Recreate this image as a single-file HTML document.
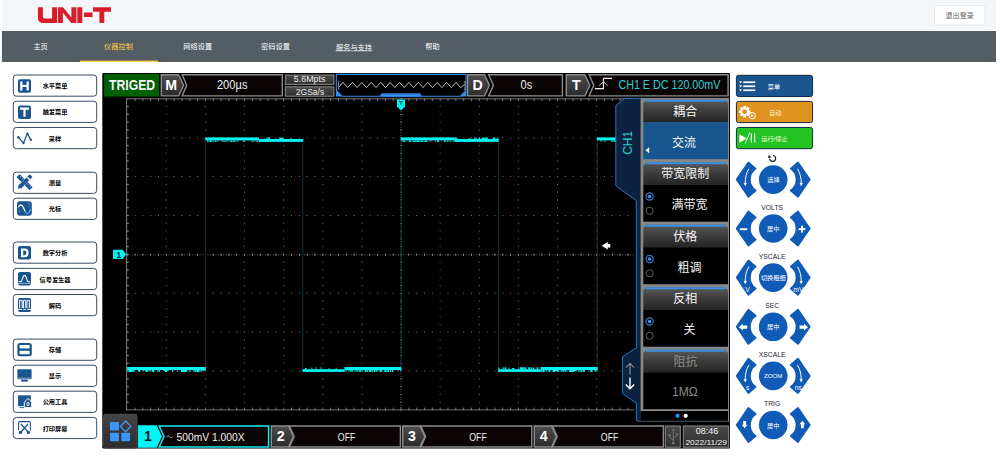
<!DOCTYPE html>
<html><head><meta charset="utf-8"><title>UNI-T</title>
<style>html,body{margin:0;padding:0;background:#fff;overflow:hidden}svg{display:block}text{font-family:"Liberation Sans","Noto Sans CJK SC",sans-serif}</style>
</head><body>
<svg width="1000" height="460" viewBox="0 0 1000 460" font-family="Liberation Sans, Noto Sans CJK SC, sans-serif">
<defs>
<linearGradient id="gpent" x1="0" y1="0" x2="0" y2="1"><stop offset="0" stop-color="#4c4c4c"/><stop offset="1" stop-color="#2b2b2b"/></linearGradient>
<linearGradient id="ghead" x1="0" y1="0" x2="0" y2="1"><stop offset="0" stop-color="#5a5a5a"/><stop offset="0.5" stop-color="#3c3c3c"/><stop offset="1" stop-color="#242424"/></linearGradient>
<linearGradient id="gsmall" x1="0" y1="0" x2="0" y2="1"><stop offset="0" stop-color="#484848"/><stop offset="1" stop-color="#303030"/></linearGradient>
<linearGradient id="gbtn" x1="0" y1="0" x2="0" y2="1"><stop offset="0" stop-color="#454545"/><stop offset="1" stop-color="#2c2c2c"/></linearGradient>
</defs>
<rect x="2" y="0" width="994" height="31" fill="#f4f7f9"/>
<rect x="2" y="31" width="994" height="31" fill="#545c64"/>
<path d="M37.9 7.2H42.9V16.7Q42.9 18.5 44.7 18.5H52.1V7.2H57V23H43.6Q37.9 23 37.9 17.4Z M57.9 23V7.2H63.1L71.4 17.5V7.2H76.4V23H71.2L62.9 12.7V23Z M77.3 7.2H82.3V23H77.3Z M83.9 12.6H92.6V17.1H83.9Z M93 7.2H111V11.7H104.3V23H99.4V11.7H93Z" fill="#d81e2c"/>
<text x="40.6" y="49.4" font-size="7.2" fill="#fff" text-anchor="middle">主页</text>
<text x="118.5" y="49.4" font-size="7.2" fill="#ffd04b" text-anchor="middle">仪器控制</text>
<text x="197.7" y="49.4" font-size="7.2" fill="#fff" text-anchor="middle">网络设置</text>
<text x="275.5" y="49.4" font-size="7.2" fill="#fff" text-anchor="middle">密码设置</text>
<text x="354" y="49.8" font-size="7.2" fill="#fff" text-anchor="middle">服务与支持</text>
<text x="432.4" y="49.4" font-size="7.2" fill="#fff" text-anchor="middle">帮助</text>
<rect x="80" y="60.6" width="78" height="1.4" fill="#ffd04b"/>
<rect x="335.5" y="50.6" width="37" height="0.6" fill="#fff"/>
<rect x="934.5" y="5.5" width="50.5" height="19.5" rx="2" fill="#fff" stroke="#dcdfe6" stroke-width="0.7"/>
<text x="959.7" y="17.8" font-size="7.1" fill="#606266" text-anchor="middle">退出登录</text>
<rect x="13.3" y="75" width="83.4" height="21.2" rx="3" fill="#fff" stroke="#24384f" stroke-width="0.9"/>
<text x="55" y="88.2" font-size="6.2" fill="#000" text-anchor="middle" font-weight="bold">水平菜单</text>
<rect x="13.3" y="101.2" width="83.4" height="21.2" rx="3" fill="#fff" stroke="#24384f" stroke-width="0.9"/>
<text x="55" y="114.4" font-size="6.2" fill="#000" text-anchor="middle" font-weight="bold">触发菜单</text>
<rect x="13.3" y="127.5" width="83.4" height="21.2" rx="3" fill="#fff" stroke="#24384f" stroke-width="0.9"/>
<text x="55" y="140.7" font-size="6.2" fill="#000" text-anchor="middle" font-weight="bold">采样</text>
<rect x="13.3" y="172.2" width="83.4" height="21.2" rx="3" fill="#fff" stroke="#24384f" stroke-width="0.9"/>
<text x="55" y="185.4" font-size="6.2" fill="#000" text-anchor="middle" font-weight="bold">测量</text>
<rect x="13.3" y="198.2" width="83.4" height="21.2" rx="3" fill="#fff" stroke="#24384f" stroke-width="0.9"/>
<text x="55" y="211.4" font-size="6.2" fill="#000" text-anchor="middle" font-weight="bold">光标</text>
<rect x="13.3" y="242" width="83.4" height="21.2" rx="3" fill="#fff" stroke="#24384f" stroke-width="0.9"/>
<text x="55" y="255.2" font-size="6.2" fill="#000" text-anchor="middle" font-weight="bold">数字分析</text>
<rect x="13.3" y="268.4" width="83.4" height="21.2" rx="3" fill="#fff" stroke="#24384f" stroke-width="0.9"/>
<text x="55" y="281.6" font-size="6.2" fill="#000" text-anchor="middle" font-weight="bold">信号发生器</text>
<rect x="13.3" y="294.5" width="83.4" height="21.2" rx="3" fill="#fff" stroke="#24384f" stroke-width="0.9"/>
<text x="55" y="307.7" font-size="6.2" fill="#000" text-anchor="middle" font-weight="bold">解码</text>
<rect x="13.3" y="339.1" width="83.4" height="21.2" rx="3" fill="#fff" stroke="#24384f" stroke-width="0.9"/>
<text x="55" y="352.3" font-size="6.2" fill="#000" text-anchor="middle" font-weight="bold">存储</text>
<rect x="13.3" y="365.2" width="83.4" height="21.2" rx="3" fill="#fff" stroke="#24384f" stroke-width="0.9"/>
<text x="55" y="378.4" font-size="6.2" fill="#000" text-anchor="middle" font-weight="bold">显示</text>
<rect x="13.3" y="391.2" width="83.4" height="21.2" rx="3" fill="#fff" stroke="#24384f" stroke-width="0.9"/>
<text x="55" y="404.4" font-size="6.2" fill="#000" text-anchor="middle" font-weight="bold">公用工具</text>
<rect x="13.3" y="417.4" width="83.4" height="21.2" rx="3" fill="#fff" stroke="#24384f" stroke-width="0.9"/>
<text x="55" y="430.6" font-size="6.2" fill="#000" text-anchor="middle" font-weight="bold">打印屏幕</text>
<rect x="18" y="79.2" width="13" height="13.6" rx="2" fill="#1b5590"/>
<path d="M20.2 81.5h2.2v3.6h4.2v-3.6h2.2v9h-2.2v-3.4h-4.2v3.4h-2.2z" fill="#fff"/>
<rect x="18" y="105.4" width="13" height="13.6" rx="2" fill="#1b5590"/>
<path d="M20 107.6h9v2.2h-3.4v7h-2.2v-7H20z" fill="#fff"/>
<path d="M18.3 137.3L23.5 143L27.4 133.6L30.8 139.8" fill="none" stroke="#1b5590" stroke-width="1.2" stroke-linejoin="round"/>
<circle cx="18.3" cy="137.3" r="1.2" fill="#1b5590"/>
<circle cx="23.5" cy="143" r="1.2" fill="#1b5590"/>
<circle cx="27.4" cy="133.6" r="1.2" fill="#1b5590"/>
<circle cx="30.8" cy="139.8" r="1.2" fill="#1b5590"/>
<g transform="translate(24.6 182.1) rotate(45)"><rect x="-9.2" y="-2.2" width="18.4" height="4.4" rx="0.5" fill="#1b5590"/><path d="M-6.6 -2.2v2M-3.8 -2.2v1.4M-1 -2.2v2M4.6 -2.2v1.4M7.2 -2.2v2" stroke="#fff" stroke-width="0.7"/></g>
<g transform="translate(24.6 182.1) rotate(-45)"><path d="M-9.8 0l3-2.2h11.6v4.4h-11.6z M5.8 -2.2h2.4q1.2 0 1.2 1.2v2q0 1.2 -1.2 1.2h-2.4z" fill="#1b5590" stroke="#fff" stroke-width="0.5"/></g>
<rect x="17" y="201.2" width="14.8" height="14.6" rx="3" fill="#1b5590"/>
<path d="M18.4 207.4c1.2-3.6 3.4-3.4 5 0.2l1.8 3.8" fill="none" stroke="#fff" stroke-width="1.2"/>
<path d="M25.2 211.4c1.6 3.4 3.6 3 5.4-2.4" fill="none" stroke="#55a6ff" stroke-width="1.2"/>
<path d="M18.6 211.6h2M18.6 209.8h1.2M27.5 203.4h2.6M28.4 205h1.7M28.8 206.6h1.3" stroke="#7fa5d2" stroke-width="0.6"/>
<rect x="18" y="246" width="13" height="13.6" rx="2" fill="#1b5590"/>
<path d="M21 248.4h3.6q4 0 4 4.4t-4 4.4H21zM23.2 250.4v4.8h1.2q2 0 2-2.4t-2-2.4z" fill="#fff" fill-rule="evenodd"/>
<rect x="18" y="272" width="13" height="13.6" rx="2" fill="#1b5590"/>
<path d="M18.6 281.8h2c1.9 0 1.6-6.4 3.9-6.4s2 6.4 3.9 6.4h2" fill="none" stroke="#fff" stroke-width="1.1"/>
<path d="M18 283.4h13" stroke="#fff" stroke-width="0.5"/>
<rect x="18" y="298" width="13" height="14" rx="2" fill="#1b5590"/>
<path d="M19.6 308v-7.6h2.6v7.6M23.4 308v-7.6h2.4v7.6M27 308v-7.6h2.4v7.6" fill="none" stroke="#fff" stroke-width="1"/>
<path d="M18 309.4h13" stroke="#fff" stroke-width="1"/>
<circle cx="22.7" cy="309.2" r="0.8" fill="#1b5590"/><circle cx="26.5" cy="309.2" r="0.8" fill="#1b5590"/>
<rect x="17.4" y="343" width="14.4" height="13.2" rx="2.5" fill="#1b5590"/>
<rect x="19.6" y="345" width="10" height="3.4" fill="#fff"/><rect x="19.6" y="350.8" width="10" height="3.4" fill="#fff"/>
<rect x="17.4" y="369.2" width="14.2" height="10" rx="0.8" fill="#1b5590"/><rect x="21.2" y="379.6" width="6.6" height="2" fill="#1b5590"/>
<path d="M17.8 378.2h13.4" stroke="#fff" stroke-width="0.5"/>
<rect x="18.1" y="395.3" width="12.7" height="10.9" fill="#1b5590"/><path d="M19.6 407.6h6" stroke="#1b5590" stroke-width="0.9"/>
<path d="M24.3 402.2l3.7-3.8 3.7 3.8v5.4h-7.4z" fill="#1b5590" stroke="#fff" stroke-width="1"/>
<ellipse cx="28" cy="404" rx="1.15" ry="1.7" fill="none" stroke="#fff" stroke-width="0.9"/>
<path d="M18.6 430.4V423Q18.6 421.6 20 421.6H29Q30.4 421.6 30.4 423V430.4" fill="none" stroke="#1b5590" stroke-width="1.1"/>
<path d="M21 424l7 8M28 424l-7 8" stroke="#1b5590" stroke-width="1.3"/>
<circle cx="20.4" cy="432.4" r="1.7" fill="#1b5590"/><circle cx="28.4" cy="432.4" r="1.7" fill="#1b5590"/>
<rect x="102.3" y="73" width="627.7" height="375.5" rx="1" fill="#000"/>
<clipPath id="gclip"><rect x="126.1" y="98.3" width="508.5" height="312.2"/></clipPath>
<g clip-path="url(#gclip)">
<path d="M126.70 98.30h1v1h-1zM126.70 106.08h1v1h-1zM126.70 113.86h1v1h-1zM126.70 121.64h1v1h-1zM126.70 129.42h1v1h-1zM126.70 137.20h1v1h-1zM126.70 144.98h1v1h-1zM126.70 152.76h1v1h-1zM126.70 160.54h1v1h-1zM126.70 168.32h1v1h-1zM126.70 176.10h1v1h-1zM126.70 183.88h1v1h-1zM126.70 191.66h1v1h-1zM126.70 199.44h1v1h-1zM126.70 207.22h1v1h-1zM126.70 215.00h1v1h-1zM126.70 222.78h1v1h-1zM126.70 230.56h1v1h-1zM126.70 238.34h1v1h-1zM126.70 246.12h1v1h-1zM126.70 253.90h1v1h-1zM126.70 261.68h1v1h-1zM126.70 269.46h1v1h-1zM126.70 277.24h1v1h-1zM126.70 285.02h1v1h-1zM126.70 292.80h1v1h-1zM126.70 300.58h1v1h-1zM126.70 308.36h1v1h-1zM126.70 316.14h1v1h-1zM126.70 323.92h1v1h-1zM126.70 331.70h1v1h-1zM126.70 339.48h1v1h-1zM126.70 347.26h1v1h-1zM126.70 355.04h1v1h-1zM126.70 362.82h1v1h-1zM126.70 370.60h1v1h-1zM126.70 378.38h1v1h-1zM126.70 386.16h1v1h-1zM126.70 393.94h1v1h-1zM126.70 401.72h1v1h-1zM126.70 409.50h1v1h-1zM165.82 98.30h1v1h-1zM165.82 106.08h1v1h-1zM165.82 113.86h1v1h-1zM165.82 121.64h1v1h-1zM165.82 129.42h1v1h-1zM165.82 137.20h1v1h-1zM165.82 144.98h1v1h-1zM165.82 152.76h1v1h-1zM165.82 160.54h1v1h-1zM165.82 168.32h1v1h-1zM165.82 176.10h1v1h-1zM165.82 183.88h1v1h-1zM165.82 191.66h1v1h-1zM165.82 199.44h1v1h-1zM165.82 207.22h1v1h-1zM165.82 215.00h1v1h-1zM165.82 222.78h1v1h-1zM165.82 230.56h1v1h-1zM165.82 238.34h1v1h-1zM165.82 246.12h1v1h-1zM165.82 253.90h1v1h-1zM165.82 261.68h1v1h-1zM165.82 269.46h1v1h-1zM165.82 277.24h1v1h-1zM165.82 285.02h1v1h-1zM165.82 292.80h1v1h-1zM165.82 300.58h1v1h-1zM165.82 308.36h1v1h-1zM165.82 316.14h1v1h-1zM165.82 323.92h1v1h-1zM165.82 331.70h1v1h-1zM165.82 339.48h1v1h-1zM165.82 347.26h1v1h-1zM165.82 355.04h1v1h-1zM165.82 362.82h1v1h-1zM165.82 370.60h1v1h-1zM165.82 378.38h1v1h-1zM165.82 386.16h1v1h-1zM165.82 393.94h1v1h-1zM165.82 401.72h1v1h-1zM165.82 409.50h1v1h-1zM204.94 98.30h1v1h-1zM204.94 106.08h1v1h-1zM204.94 113.86h1v1h-1zM204.94 121.64h1v1h-1zM204.94 129.42h1v1h-1zM204.94 137.20h1v1h-1zM204.94 144.98h1v1h-1zM204.94 152.76h1v1h-1zM204.94 160.54h1v1h-1zM204.94 168.32h1v1h-1zM204.94 176.10h1v1h-1zM204.94 183.88h1v1h-1zM204.94 191.66h1v1h-1zM204.94 199.44h1v1h-1zM204.94 207.22h1v1h-1zM204.94 215.00h1v1h-1zM204.94 222.78h1v1h-1zM204.94 230.56h1v1h-1zM204.94 238.34h1v1h-1zM204.94 246.12h1v1h-1zM204.94 253.90h1v1h-1zM204.94 261.68h1v1h-1zM204.94 269.46h1v1h-1zM204.94 277.24h1v1h-1zM204.94 285.02h1v1h-1zM204.94 292.80h1v1h-1zM204.94 300.58h1v1h-1zM204.94 308.36h1v1h-1zM204.94 316.14h1v1h-1zM204.94 323.92h1v1h-1zM204.94 331.70h1v1h-1zM204.94 339.48h1v1h-1zM204.94 347.26h1v1h-1zM204.94 355.04h1v1h-1zM204.94 362.82h1v1h-1zM204.94 370.60h1v1h-1zM204.94 378.38h1v1h-1zM204.94 386.16h1v1h-1zM204.94 393.94h1v1h-1zM204.94 401.72h1v1h-1zM204.94 409.50h1v1h-1zM244.06 98.30h1v1h-1zM244.06 106.08h1v1h-1zM244.06 113.86h1v1h-1zM244.06 121.64h1v1h-1zM244.06 129.42h1v1h-1zM244.06 137.20h1v1h-1zM244.06 144.98h1v1h-1zM244.06 152.76h1v1h-1zM244.06 160.54h1v1h-1zM244.06 168.32h1v1h-1zM244.06 176.10h1v1h-1zM244.06 183.88h1v1h-1zM244.06 191.66h1v1h-1zM244.06 199.44h1v1h-1zM244.06 207.22h1v1h-1zM244.06 215.00h1v1h-1zM244.06 222.78h1v1h-1zM244.06 230.56h1v1h-1zM244.06 238.34h1v1h-1zM244.06 246.12h1v1h-1zM244.06 253.90h1v1h-1zM244.06 261.68h1v1h-1zM244.06 269.46h1v1h-1zM244.06 277.24h1v1h-1zM244.06 285.02h1v1h-1zM244.06 292.80h1v1h-1zM244.06 300.58h1v1h-1zM244.06 308.36h1v1h-1zM244.06 316.14h1v1h-1zM244.06 323.92h1v1h-1zM244.06 331.70h1v1h-1zM244.06 339.48h1v1h-1zM244.06 347.26h1v1h-1zM244.06 355.04h1v1h-1zM244.06 362.82h1v1h-1zM244.06 370.60h1v1h-1zM244.06 378.38h1v1h-1zM244.06 386.16h1v1h-1zM244.06 393.94h1v1h-1zM244.06 401.72h1v1h-1zM244.06 409.50h1v1h-1zM283.18 98.30h1v1h-1zM283.18 106.08h1v1h-1zM283.18 113.86h1v1h-1zM283.18 121.64h1v1h-1zM283.18 129.42h1v1h-1zM283.18 137.20h1v1h-1zM283.18 144.98h1v1h-1zM283.18 152.76h1v1h-1zM283.18 160.54h1v1h-1zM283.18 168.32h1v1h-1zM283.18 176.10h1v1h-1zM283.18 183.88h1v1h-1zM283.18 191.66h1v1h-1zM283.18 199.44h1v1h-1zM283.18 207.22h1v1h-1zM283.18 215.00h1v1h-1zM283.18 222.78h1v1h-1zM283.18 230.56h1v1h-1zM283.18 238.34h1v1h-1zM283.18 246.12h1v1h-1zM283.18 253.90h1v1h-1zM283.18 261.68h1v1h-1zM283.18 269.46h1v1h-1zM283.18 277.24h1v1h-1zM283.18 285.02h1v1h-1zM283.18 292.80h1v1h-1zM283.18 300.58h1v1h-1zM283.18 308.36h1v1h-1zM283.18 316.14h1v1h-1zM283.18 323.92h1v1h-1zM283.18 331.70h1v1h-1zM283.18 339.48h1v1h-1zM283.18 347.26h1v1h-1zM283.18 355.04h1v1h-1zM283.18 362.82h1v1h-1zM283.18 370.60h1v1h-1zM283.18 378.38h1v1h-1zM283.18 386.16h1v1h-1zM283.18 393.94h1v1h-1zM283.18 401.72h1v1h-1zM283.18 409.50h1v1h-1zM322.30 98.30h1v1h-1zM322.30 106.08h1v1h-1zM322.30 113.86h1v1h-1zM322.30 121.64h1v1h-1zM322.30 129.42h1v1h-1zM322.30 137.20h1v1h-1zM322.30 144.98h1v1h-1zM322.30 152.76h1v1h-1zM322.30 160.54h1v1h-1zM322.30 168.32h1v1h-1zM322.30 176.10h1v1h-1zM322.30 183.88h1v1h-1zM322.30 191.66h1v1h-1zM322.30 199.44h1v1h-1zM322.30 207.22h1v1h-1zM322.30 215.00h1v1h-1zM322.30 222.78h1v1h-1zM322.30 230.56h1v1h-1zM322.30 238.34h1v1h-1zM322.30 246.12h1v1h-1zM322.30 253.90h1v1h-1zM322.30 261.68h1v1h-1zM322.30 269.46h1v1h-1zM322.30 277.24h1v1h-1zM322.30 285.02h1v1h-1zM322.30 292.80h1v1h-1zM322.30 300.58h1v1h-1zM322.30 308.36h1v1h-1zM322.30 316.14h1v1h-1zM322.30 323.92h1v1h-1zM322.30 331.70h1v1h-1zM322.30 339.48h1v1h-1zM322.30 347.26h1v1h-1zM322.30 355.04h1v1h-1zM322.30 362.82h1v1h-1zM322.30 370.60h1v1h-1zM322.30 378.38h1v1h-1zM322.30 386.16h1v1h-1zM322.30 393.94h1v1h-1zM322.30 401.72h1v1h-1zM322.30 409.50h1v1h-1zM361.42 98.30h1v1h-1zM361.42 106.08h1v1h-1zM361.42 113.86h1v1h-1zM361.42 121.64h1v1h-1zM361.42 129.42h1v1h-1zM361.42 137.20h1v1h-1zM361.42 144.98h1v1h-1zM361.42 152.76h1v1h-1zM361.42 160.54h1v1h-1zM361.42 168.32h1v1h-1zM361.42 176.10h1v1h-1zM361.42 183.88h1v1h-1zM361.42 191.66h1v1h-1zM361.42 199.44h1v1h-1zM361.42 207.22h1v1h-1zM361.42 215.00h1v1h-1zM361.42 222.78h1v1h-1zM361.42 230.56h1v1h-1zM361.42 238.34h1v1h-1zM361.42 246.12h1v1h-1zM361.42 253.90h1v1h-1zM361.42 261.68h1v1h-1zM361.42 269.46h1v1h-1zM361.42 277.24h1v1h-1zM361.42 285.02h1v1h-1zM361.42 292.80h1v1h-1zM361.42 300.58h1v1h-1zM361.42 308.36h1v1h-1zM361.42 316.14h1v1h-1zM361.42 323.92h1v1h-1zM361.42 331.70h1v1h-1zM361.42 339.48h1v1h-1zM361.42 347.26h1v1h-1zM361.42 355.04h1v1h-1zM361.42 362.82h1v1h-1zM361.42 370.60h1v1h-1zM361.42 378.38h1v1h-1zM361.42 386.16h1v1h-1zM361.42 393.94h1v1h-1zM361.42 401.72h1v1h-1zM361.42 409.50h1v1h-1zM400.54 98.30h1v1h-1zM400.54 106.08h1v1h-1zM400.54 113.86h1v1h-1zM400.54 121.64h1v1h-1zM400.54 129.42h1v1h-1zM400.54 137.20h1v1h-1zM400.54 144.98h1v1h-1zM400.54 152.76h1v1h-1zM400.54 160.54h1v1h-1zM400.54 168.32h1v1h-1zM400.54 176.10h1v1h-1zM400.54 183.88h1v1h-1zM400.54 191.66h1v1h-1zM400.54 199.44h1v1h-1zM400.54 207.22h1v1h-1zM400.54 215.00h1v1h-1zM400.54 222.78h1v1h-1zM400.54 230.56h1v1h-1zM400.54 238.34h1v1h-1zM400.54 246.12h1v1h-1zM400.54 253.90h1v1h-1zM400.54 261.68h1v1h-1zM400.54 269.46h1v1h-1zM400.54 277.24h1v1h-1zM400.54 285.02h1v1h-1zM400.54 292.80h1v1h-1zM400.54 300.58h1v1h-1zM400.54 308.36h1v1h-1zM400.54 316.14h1v1h-1zM400.54 323.92h1v1h-1zM400.54 331.70h1v1h-1zM400.54 339.48h1v1h-1zM400.54 347.26h1v1h-1zM400.54 355.04h1v1h-1zM400.54 362.82h1v1h-1zM400.54 370.60h1v1h-1zM400.54 378.38h1v1h-1zM400.54 386.16h1v1h-1zM400.54 393.94h1v1h-1zM400.54 401.72h1v1h-1zM400.54 409.50h1v1h-1zM439.66 98.30h1v1h-1zM439.66 106.08h1v1h-1zM439.66 113.86h1v1h-1zM439.66 121.64h1v1h-1zM439.66 129.42h1v1h-1zM439.66 137.20h1v1h-1zM439.66 144.98h1v1h-1zM439.66 152.76h1v1h-1zM439.66 160.54h1v1h-1zM439.66 168.32h1v1h-1zM439.66 176.10h1v1h-1zM439.66 183.88h1v1h-1zM439.66 191.66h1v1h-1zM439.66 199.44h1v1h-1zM439.66 207.22h1v1h-1zM439.66 215.00h1v1h-1zM439.66 222.78h1v1h-1zM439.66 230.56h1v1h-1zM439.66 238.34h1v1h-1zM439.66 246.12h1v1h-1zM439.66 253.90h1v1h-1zM439.66 261.68h1v1h-1zM439.66 269.46h1v1h-1zM439.66 277.24h1v1h-1zM439.66 285.02h1v1h-1zM439.66 292.80h1v1h-1zM439.66 300.58h1v1h-1zM439.66 308.36h1v1h-1zM439.66 316.14h1v1h-1zM439.66 323.92h1v1h-1zM439.66 331.70h1v1h-1zM439.66 339.48h1v1h-1zM439.66 347.26h1v1h-1zM439.66 355.04h1v1h-1zM439.66 362.82h1v1h-1zM439.66 370.60h1v1h-1zM439.66 378.38h1v1h-1zM439.66 386.16h1v1h-1zM439.66 393.94h1v1h-1zM439.66 401.72h1v1h-1zM439.66 409.50h1v1h-1zM478.78 98.30h1v1h-1zM478.78 106.08h1v1h-1zM478.78 113.86h1v1h-1zM478.78 121.64h1v1h-1zM478.78 129.42h1v1h-1zM478.78 137.20h1v1h-1zM478.78 144.98h1v1h-1zM478.78 152.76h1v1h-1zM478.78 160.54h1v1h-1zM478.78 168.32h1v1h-1zM478.78 176.10h1v1h-1zM478.78 183.88h1v1h-1zM478.78 191.66h1v1h-1zM478.78 199.44h1v1h-1zM478.78 207.22h1v1h-1zM478.78 215.00h1v1h-1zM478.78 222.78h1v1h-1zM478.78 230.56h1v1h-1zM478.78 238.34h1v1h-1zM478.78 246.12h1v1h-1zM478.78 253.90h1v1h-1zM478.78 261.68h1v1h-1zM478.78 269.46h1v1h-1zM478.78 277.24h1v1h-1zM478.78 285.02h1v1h-1zM478.78 292.80h1v1h-1zM478.78 300.58h1v1h-1zM478.78 308.36h1v1h-1zM478.78 316.14h1v1h-1zM478.78 323.92h1v1h-1zM478.78 331.70h1v1h-1zM478.78 339.48h1v1h-1zM478.78 347.26h1v1h-1zM478.78 355.04h1v1h-1zM478.78 362.82h1v1h-1zM478.78 370.60h1v1h-1zM478.78 378.38h1v1h-1zM478.78 386.16h1v1h-1zM478.78 393.94h1v1h-1zM478.78 401.72h1v1h-1zM478.78 409.50h1v1h-1zM517.90 98.30h1v1h-1zM517.90 106.08h1v1h-1zM517.90 113.86h1v1h-1zM517.90 121.64h1v1h-1zM517.90 129.42h1v1h-1zM517.90 137.20h1v1h-1zM517.90 144.98h1v1h-1zM517.90 152.76h1v1h-1zM517.90 160.54h1v1h-1zM517.90 168.32h1v1h-1zM517.90 176.10h1v1h-1zM517.90 183.88h1v1h-1zM517.90 191.66h1v1h-1zM517.90 199.44h1v1h-1zM517.90 207.22h1v1h-1zM517.90 215.00h1v1h-1zM517.90 222.78h1v1h-1zM517.90 230.56h1v1h-1zM517.90 238.34h1v1h-1zM517.90 246.12h1v1h-1zM517.90 253.90h1v1h-1zM517.90 261.68h1v1h-1zM517.90 269.46h1v1h-1zM517.90 277.24h1v1h-1zM517.90 285.02h1v1h-1zM517.90 292.80h1v1h-1zM517.90 300.58h1v1h-1zM517.90 308.36h1v1h-1zM517.90 316.14h1v1h-1zM517.90 323.92h1v1h-1zM517.90 331.70h1v1h-1zM517.90 339.48h1v1h-1zM517.90 347.26h1v1h-1zM517.90 355.04h1v1h-1zM517.90 362.82h1v1h-1zM517.90 370.60h1v1h-1zM517.90 378.38h1v1h-1zM517.90 386.16h1v1h-1zM517.90 393.94h1v1h-1zM517.90 401.72h1v1h-1zM517.90 409.50h1v1h-1zM557.02 98.30h1v1h-1zM557.02 106.08h1v1h-1zM557.02 113.86h1v1h-1zM557.02 121.64h1v1h-1zM557.02 129.42h1v1h-1zM557.02 137.20h1v1h-1zM557.02 144.98h1v1h-1zM557.02 152.76h1v1h-1zM557.02 160.54h1v1h-1zM557.02 168.32h1v1h-1zM557.02 176.10h1v1h-1zM557.02 183.88h1v1h-1zM557.02 191.66h1v1h-1zM557.02 199.44h1v1h-1zM557.02 207.22h1v1h-1zM557.02 215.00h1v1h-1zM557.02 222.78h1v1h-1zM557.02 230.56h1v1h-1zM557.02 238.34h1v1h-1zM557.02 246.12h1v1h-1zM557.02 253.90h1v1h-1zM557.02 261.68h1v1h-1zM557.02 269.46h1v1h-1zM557.02 277.24h1v1h-1zM557.02 285.02h1v1h-1zM557.02 292.80h1v1h-1zM557.02 300.58h1v1h-1zM557.02 308.36h1v1h-1zM557.02 316.14h1v1h-1zM557.02 323.92h1v1h-1zM557.02 331.70h1v1h-1zM557.02 339.48h1v1h-1zM557.02 347.26h1v1h-1zM557.02 355.04h1v1h-1zM557.02 362.82h1v1h-1zM557.02 370.60h1v1h-1zM557.02 378.38h1v1h-1zM557.02 386.16h1v1h-1zM557.02 393.94h1v1h-1zM557.02 401.72h1v1h-1zM557.02 409.50h1v1h-1zM596.14 98.30h1v1h-1zM596.14 106.08h1v1h-1zM596.14 113.86h1v1h-1zM596.14 121.64h1v1h-1zM596.14 129.42h1v1h-1zM596.14 137.20h1v1h-1zM596.14 144.98h1v1h-1zM596.14 152.76h1v1h-1zM596.14 160.54h1v1h-1zM596.14 168.32h1v1h-1zM596.14 176.10h1v1h-1zM596.14 183.88h1v1h-1zM596.14 191.66h1v1h-1zM596.14 199.44h1v1h-1zM596.14 207.22h1v1h-1zM596.14 215.00h1v1h-1zM596.14 222.78h1v1h-1zM596.14 230.56h1v1h-1zM596.14 238.34h1v1h-1zM596.14 246.12h1v1h-1zM596.14 253.90h1v1h-1zM596.14 261.68h1v1h-1zM596.14 269.46h1v1h-1zM596.14 277.24h1v1h-1zM596.14 285.02h1v1h-1zM596.14 292.80h1v1h-1zM596.14 300.58h1v1h-1zM596.14 308.36h1v1h-1zM596.14 316.14h1v1h-1zM596.14 323.92h1v1h-1zM596.14 331.70h1v1h-1zM596.14 339.48h1v1h-1zM596.14 347.26h1v1h-1zM596.14 355.04h1v1h-1zM596.14 362.82h1v1h-1zM596.14 370.60h1v1h-1zM596.14 378.38h1v1h-1zM596.14 386.16h1v1h-1zM596.14 393.94h1v1h-1zM596.14 401.72h1v1h-1zM596.14 409.50h1v1h-1zM635.26 98.30h1v1h-1zM635.26 106.08h1v1h-1zM635.26 113.86h1v1h-1zM635.26 121.64h1v1h-1zM635.26 129.42h1v1h-1zM635.26 137.20h1v1h-1zM635.26 144.98h1v1h-1zM635.26 152.76h1v1h-1zM635.26 160.54h1v1h-1zM635.26 168.32h1v1h-1zM635.26 176.10h1v1h-1zM635.26 183.88h1v1h-1zM635.26 191.66h1v1h-1zM635.26 199.44h1v1h-1zM635.26 207.22h1v1h-1zM635.26 215.00h1v1h-1zM635.26 222.78h1v1h-1zM635.26 230.56h1v1h-1zM635.26 238.34h1v1h-1zM635.26 246.12h1v1h-1zM635.26 253.90h1v1h-1zM635.26 261.68h1v1h-1zM635.26 269.46h1v1h-1zM635.26 277.24h1v1h-1zM635.26 285.02h1v1h-1zM635.26 292.80h1v1h-1zM635.26 300.58h1v1h-1zM635.26 308.36h1v1h-1zM635.26 316.14h1v1h-1zM635.26 323.92h1v1h-1zM635.26 331.70h1v1h-1zM635.26 339.48h1v1h-1zM635.26 347.26h1v1h-1zM635.26 355.04h1v1h-1zM635.26 362.82h1v1h-1zM635.26 370.60h1v1h-1zM635.26 378.38h1v1h-1zM635.26 386.16h1v1h-1zM635.26 393.94h1v1h-1zM635.26 401.72h1v1h-1zM635.26 409.50h1v1h-1zM674.38 98.30h1v1h-1zM674.38 106.08h1v1h-1zM674.38 113.86h1v1h-1zM674.38 121.64h1v1h-1zM674.38 129.42h1v1h-1zM674.38 137.20h1v1h-1zM674.38 144.98h1v1h-1zM674.38 152.76h1v1h-1zM674.38 160.54h1v1h-1zM674.38 168.32h1v1h-1zM674.38 176.10h1v1h-1zM674.38 183.88h1v1h-1zM674.38 191.66h1v1h-1zM674.38 199.44h1v1h-1zM674.38 207.22h1v1h-1zM674.38 215.00h1v1h-1zM674.38 222.78h1v1h-1zM674.38 230.56h1v1h-1zM674.38 238.34h1v1h-1zM674.38 246.12h1v1h-1zM674.38 253.90h1v1h-1zM674.38 261.68h1v1h-1zM674.38 269.46h1v1h-1zM674.38 277.24h1v1h-1zM674.38 285.02h1v1h-1zM674.38 292.80h1v1h-1zM674.38 300.58h1v1h-1zM674.38 308.36h1v1h-1zM674.38 316.14h1v1h-1zM674.38 323.92h1v1h-1zM674.38 331.70h1v1h-1zM674.38 339.48h1v1h-1zM674.38 347.26h1v1h-1zM674.38 355.04h1v1h-1zM674.38 362.82h1v1h-1zM674.38 370.60h1v1h-1zM674.38 378.38h1v1h-1zM674.38 386.16h1v1h-1zM674.38 393.94h1v1h-1zM674.38 401.72h1v1h-1zM674.38 409.50h1v1h-1zM126.70 98.30h1v1h-1zM134.52 98.30h1v1h-1zM142.35 98.30h1v1h-1zM150.17 98.30h1v1h-1zM158.00 98.30h1v1h-1zM165.82 98.30h1v1h-1zM173.64 98.30h1v1h-1zM181.47 98.30h1v1h-1zM189.29 98.30h1v1h-1zM197.12 98.30h1v1h-1zM204.94 98.30h1v1h-1zM212.76 98.30h1v1h-1zM220.59 98.30h1v1h-1zM228.41 98.30h1v1h-1zM236.24 98.30h1v1h-1zM244.06 98.30h1v1h-1zM251.88 98.30h1v1h-1zM259.71 98.30h1v1h-1zM267.53 98.30h1v1h-1zM275.36 98.30h1v1h-1zM283.18 98.30h1v1h-1zM291.00 98.30h1v1h-1zM298.83 98.30h1v1h-1zM306.65 98.30h1v1h-1zM314.48 98.30h1v1h-1zM322.30 98.30h1v1h-1zM330.12 98.30h1v1h-1zM337.95 98.30h1v1h-1zM345.77 98.30h1v1h-1zM353.60 98.30h1v1h-1zM361.42 98.30h1v1h-1zM369.24 98.30h1v1h-1zM377.07 98.30h1v1h-1zM384.89 98.30h1v1h-1zM392.72 98.30h1v1h-1zM400.54 98.30h1v1h-1zM408.36 98.30h1v1h-1zM416.19 98.30h1v1h-1zM424.01 98.30h1v1h-1zM431.84 98.30h1v1h-1zM439.66 98.30h1v1h-1zM447.48 98.30h1v1h-1zM455.31 98.30h1v1h-1zM463.13 98.30h1v1h-1zM470.96 98.30h1v1h-1zM478.78 98.30h1v1h-1zM486.60 98.30h1v1h-1zM494.43 98.30h1v1h-1zM502.25 98.30h1v1h-1zM510.08 98.30h1v1h-1zM517.90 98.30h1v1h-1zM525.72 98.30h1v1h-1zM533.55 98.30h1v1h-1zM541.37 98.30h1v1h-1zM549.20 98.30h1v1h-1zM557.02 98.30h1v1h-1zM564.84 98.30h1v1h-1zM572.67 98.30h1v1h-1zM580.49 98.30h1v1h-1zM588.32 98.30h1v1h-1zM596.14 98.30h1v1h-1zM603.96 98.30h1v1h-1zM611.79 98.30h1v1h-1zM619.61 98.30h1v1h-1zM627.44 98.30h1v1h-1zM635.26 98.30h1v1h-1zM643.08 98.30h1v1h-1zM650.91 98.30h1v1h-1zM658.73 98.30h1v1h-1zM666.56 98.30h1v1h-1zM674.38 98.30h1v1h-1zM126.70 137.20h1v1h-1zM134.52 137.20h1v1h-1zM142.35 137.20h1v1h-1zM150.17 137.20h1v1h-1zM158.00 137.20h1v1h-1zM165.82 137.20h1v1h-1zM173.64 137.20h1v1h-1zM181.47 137.20h1v1h-1zM189.29 137.20h1v1h-1zM197.12 137.20h1v1h-1zM204.94 137.20h1v1h-1zM212.76 137.20h1v1h-1zM220.59 137.20h1v1h-1zM228.41 137.20h1v1h-1zM236.24 137.20h1v1h-1zM244.06 137.20h1v1h-1zM251.88 137.20h1v1h-1zM259.71 137.20h1v1h-1zM267.53 137.20h1v1h-1zM275.36 137.20h1v1h-1zM283.18 137.20h1v1h-1zM291.00 137.20h1v1h-1zM298.83 137.20h1v1h-1zM306.65 137.20h1v1h-1zM314.48 137.20h1v1h-1zM322.30 137.20h1v1h-1zM330.12 137.20h1v1h-1zM337.95 137.20h1v1h-1zM345.77 137.20h1v1h-1zM353.60 137.20h1v1h-1zM361.42 137.20h1v1h-1zM369.24 137.20h1v1h-1zM377.07 137.20h1v1h-1zM384.89 137.20h1v1h-1zM392.72 137.20h1v1h-1zM400.54 137.20h1v1h-1zM408.36 137.20h1v1h-1zM416.19 137.20h1v1h-1zM424.01 137.20h1v1h-1zM431.84 137.20h1v1h-1zM439.66 137.20h1v1h-1zM447.48 137.20h1v1h-1zM455.31 137.20h1v1h-1zM463.13 137.20h1v1h-1zM470.96 137.20h1v1h-1zM478.78 137.20h1v1h-1zM486.60 137.20h1v1h-1zM494.43 137.20h1v1h-1zM502.25 137.20h1v1h-1zM510.08 137.20h1v1h-1zM517.90 137.20h1v1h-1zM525.72 137.20h1v1h-1zM533.55 137.20h1v1h-1zM541.37 137.20h1v1h-1zM549.20 137.20h1v1h-1zM557.02 137.20h1v1h-1zM564.84 137.20h1v1h-1zM572.67 137.20h1v1h-1zM580.49 137.20h1v1h-1zM588.32 137.20h1v1h-1zM596.14 137.20h1v1h-1zM603.96 137.20h1v1h-1zM611.79 137.20h1v1h-1zM619.61 137.20h1v1h-1zM627.44 137.20h1v1h-1zM635.26 137.20h1v1h-1zM643.08 137.20h1v1h-1zM650.91 137.20h1v1h-1zM658.73 137.20h1v1h-1zM666.56 137.20h1v1h-1zM674.38 137.20h1v1h-1zM126.70 176.10h1v1h-1zM134.52 176.10h1v1h-1zM142.35 176.10h1v1h-1zM150.17 176.10h1v1h-1zM158.00 176.10h1v1h-1zM165.82 176.10h1v1h-1zM173.64 176.10h1v1h-1zM181.47 176.10h1v1h-1zM189.29 176.10h1v1h-1zM197.12 176.10h1v1h-1zM204.94 176.10h1v1h-1zM212.76 176.10h1v1h-1zM220.59 176.10h1v1h-1zM228.41 176.10h1v1h-1zM236.24 176.10h1v1h-1zM244.06 176.10h1v1h-1zM251.88 176.10h1v1h-1zM259.71 176.10h1v1h-1zM267.53 176.10h1v1h-1zM275.36 176.10h1v1h-1zM283.18 176.10h1v1h-1zM291.00 176.10h1v1h-1zM298.83 176.10h1v1h-1zM306.65 176.10h1v1h-1zM314.48 176.10h1v1h-1zM322.30 176.10h1v1h-1zM330.12 176.10h1v1h-1zM337.95 176.10h1v1h-1zM345.77 176.10h1v1h-1zM353.60 176.10h1v1h-1zM361.42 176.10h1v1h-1zM369.24 176.10h1v1h-1zM377.07 176.10h1v1h-1zM384.89 176.10h1v1h-1zM392.72 176.10h1v1h-1zM400.54 176.10h1v1h-1zM408.36 176.10h1v1h-1zM416.19 176.10h1v1h-1zM424.01 176.10h1v1h-1zM431.84 176.10h1v1h-1zM439.66 176.10h1v1h-1zM447.48 176.10h1v1h-1zM455.31 176.10h1v1h-1zM463.13 176.10h1v1h-1zM470.96 176.10h1v1h-1zM478.78 176.10h1v1h-1zM486.60 176.10h1v1h-1zM494.43 176.10h1v1h-1zM502.25 176.10h1v1h-1zM510.08 176.10h1v1h-1zM517.90 176.10h1v1h-1zM525.72 176.10h1v1h-1zM533.55 176.10h1v1h-1zM541.37 176.10h1v1h-1zM549.20 176.10h1v1h-1zM557.02 176.10h1v1h-1zM564.84 176.10h1v1h-1zM572.67 176.10h1v1h-1zM580.49 176.10h1v1h-1zM588.32 176.10h1v1h-1zM596.14 176.10h1v1h-1zM603.96 176.10h1v1h-1zM611.79 176.10h1v1h-1zM619.61 176.10h1v1h-1zM627.44 176.10h1v1h-1zM635.26 176.10h1v1h-1zM643.08 176.10h1v1h-1zM650.91 176.10h1v1h-1zM658.73 176.10h1v1h-1zM666.56 176.10h1v1h-1zM674.38 176.10h1v1h-1zM126.70 215.00h1v1h-1zM134.52 215.00h1v1h-1zM142.35 215.00h1v1h-1zM150.17 215.00h1v1h-1zM158.00 215.00h1v1h-1zM165.82 215.00h1v1h-1zM173.64 215.00h1v1h-1zM181.47 215.00h1v1h-1zM189.29 215.00h1v1h-1zM197.12 215.00h1v1h-1zM204.94 215.00h1v1h-1zM212.76 215.00h1v1h-1zM220.59 215.00h1v1h-1zM228.41 215.00h1v1h-1zM236.24 215.00h1v1h-1zM244.06 215.00h1v1h-1zM251.88 215.00h1v1h-1zM259.71 215.00h1v1h-1zM267.53 215.00h1v1h-1zM275.36 215.00h1v1h-1zM283.18 215.00h1v1h-1zM291.00 215.00h1v1h-1zM298.83 215.00h1v1h-1zM306.65 215.00h1v1h-1zM314.48 215.00h1v1h-1zM322.30 215.00h1v1h-1zM330.12 215.00h1v1h-1zM337.95 215.00h1v1h-1zM345.77 215.00h1v1h-1zM353.60 215.00h1v1h-1zM361.42 215.00h1v1h-1zM369.24 215.00h1v1h-1zM377.07 215.00h1v1h-1zM384.89 215.00h1v1h-1zM392.72 215.00h1v1h-1zM400.54 215.00h1v1h-1zM408.36 215.00h1v1h-1zM416.19 215.00h1v1h-1zM424.01 215.00h1v1h-1zM431.84 215.00h1v1h-1zM439.66 215.00h1v1h-1zM447.48 215.00h1v1h-1zM455.31 215.00h1v1h-1zM463.13 215.00h1v1h-1zM470.96 215.00h1v1h-1zM478.78 215.00h1v1h-1zM486.60 215.00h1v1h-1zM494.43 215.00h1v1h-1zM502.25 215.00h1v1h-1zM510.08 215.00h1v1h-1zM517.90 215.00h1v1h-1zM525.72 215.00h1v1h-1zM533.55 215.00h1v1h-1zM541.37 215.00h1v1h-1zM549.20 215.00h1v1h-1zM557.02 215.00h1v1h-1zM564.84 215.00h1v1h-1zM572.67 215.00h1v1h-1zM580.49 215.00h1v1h-1zM588.32 215.00h1v1h-1zM596.14 215.00h1v1h-1zM603.96 215.00h1v1h-1zM611.79 215.00h1v1h-1zM619.61 215.00h1v1h-1zM627.44 215.00h1v1h-1zM635.26 215.00h1v1h-1zM643.08 215.00h1v1h-1zM650.91 215.00h1v1h-1zM658.73 215.00h1v1h-1zM666.56 215.00h1v1h-1zM674.38 215.00h1v1h-1zM126.70 253.90h1v1h-1zM134.52 253.90h1v1h-1zM142.35 253.90h1v1h-1zM150.17 253.90h1v1h-1zM158.00 253.90h1v1h-1zM165.82 253.90h1v1h-1zM173.64 253.90h1v1h-1zM181.47 253.90h1v1h-1zM189.29 253.90h1v1h-1zM197.12 253.90h1v1h-1zM204.94 253.90h1v1h-1zM212.76 253.90h1v1h-1zM220.59 253.90h1v1h-1zM228.41 253.90h1v1h-1zM236.24 253.90h1v1h-1zM244.06 253.90h1v1h-1zM251.88 253.90h1v1h-1zM259.71 253.90h1v1h-1zM267.53 253.90h1v1h-1zM275.36 253.90h1v1h-1zM283.18 253.90h1v1h-1zM291.00 253.90h1v1h-1zM298.83 253.90h1v1h-1zM306.65 253.90h1v1h-1zM314.48 253.90h1v1h-1zM322.30 253.90h1v1h-1zM330.12 253.90h1v1h-1zM337.95 253.90h1v1h-1zM345.77 253.90h1v1h-1zM353.60 253.90h1v1h-1zM361.42 253.90h1v1h-1zM369.24 253.90h1v1h-1zM377.07 253.90h1v1h-1zM384.89 253.90h1v1h-1zM392.72 253.90h1v1h-1zM400.54 253.90h1v1h-1zM408.36 253.90h1v1h-1zM416.19 253.90h1v1h-1zM424.01 253.90h1v1h-1zM431.84 253.90h1v1h-1zM439.66 253.90h1v1h-1zM447.48 253.90h1v1h-1zM455.31 253.90h1v1h-1zM463.13 253.90h1v1h-1zM470.96 253.90h1v1h-1zM478.78 253.90h1v1h-1zM486.60 253.90h1v1h-1zM494.43 253.90h1v1h-1zM502.25 253.90h1v1h-1zM510.08 253.90h1v1h-1zM517.90 253.90h1v1h-1zM525.72 253.90h1v1h-1zM533.55 253.90h1v1h-1zM541.37 253.90h1v1h-1zM549.20 253.90h1v1h-1zM557.02 253.90h1v1h-1zM564.84 253.90h1v1h-1zM572.67 253.90h1v1h-1zM580.49 253.90h1v1h-1zM588.32 253.90h1v1h-1zM596.14 253.90h1v1h-1zM603.96 253.90h1v1h-1zM611.79 253.90h1v1h-1zM619.61 253.90h1v1h-1zM627.44 253.90h1v1h-1zM635.26 253.90h1v1h-1zM643.08 253.90h1v1h-1zM650.91 253.90h1v1h-1zM658.73 253.90h1v1h-1zM666.56 253.90h1v1h-1zM674.38 253.90h1v1h-1zM126.70 292.80h1v1h-1zM134.52 292.80h1v1h-1zM142.35 292.80h1v1h-1zM150.17 292.80h1v1h-1zM158.00 292.80h1v1h-1zM165.82 292.80h1v1h-1zM173.64 292.80h1v1h-1zM181.47 292.80h1v1h-1zM189.29 292.80h1v1h-1zM197.12 292.80h1v1h-1zM204.94 292.80h1v1h-1zM212.76 292.80h1v1h-1zM220.59 292.80h1v1h-1zM228.41 292.80h1v1h-1zM236.24 292.80h1v1h-1zM244.06 292.80h1v1h-1zM251.88 292.80h1v1h-1zM259.71 292.80h1v1h-1zM267.53 292.80h1v1h-1zM275.36 292.80h1v1h-1zM283.18 292.80h1v1h-1zM291.00 292.80h1v1h-1zM298.83 292.80h1v1h-1zM306.65 292.80h1v1h-1zM314.48 292.80h1v1h-1zM322.30 292.80h1v1h-1zM330.12 292.80h1v1h-1zM337.95 292.80h1v1h-1zM345.77 292.80h1v1h-1zM353.60 292.80h1v1h-1zM361.42 292.80h1v1h-1zM369.24 292.80h1v1h-1zM377.07 292.80h1v1h-1zM384.89 292.80h1v1h-1zM392.72 292.80h1v1h-1zM400.54 292.80h1v1h-1zM408.36 292.80h1v1h-1zM416.19 292.80h1v1h-1zM424.01 292.80h1v1h-1zM431.84 292.80h1v1h-1zM439.66 292.80h1v1h-1zM447.48 292.80h1v1h-1zM455.31 292.80h1v1h-1zM463.13 292.80h1v1h-1zM470.96 292.80h1v1h-1zM478.78 292.80h1v1h-1zM486.60 292.80h1v1h-1zM494.43 292.80h1v1h-1zM502.25 292.80h1v1h-1zM510.08 292.80h1v1h-1zM517.90 292.80h1v1h-1zM525.72 292.80h1v1h-1zM533.55 292.80h1v1h-1zM541.37 292.80h1v1h-1zM549.20 292.80h1v1h-1zM557.02 292.80h1v1h-1zM564.84 292.80h1v1h-1zM572.67 292.80h1v1h-1zM580.49 292.80h1v1h-1zM588.32 292.80h1v1h-1zM596.14 292.80h1v1h-1zM603.96 292.80h1v1h-1zM611.79 292.80h1v1h-1zM619.61 292.80h1v1h-1zM627.44 292.80h1v1h-1zM635.26 292.80h1v1h-1zM643.08 292.80h1v1h-1zM650.91 292.80h1v1h-1zM658.73 292.80h1v1h-1zM666.56 292.80h1v1h-1zM674.38 292.80h1v1h-1zM126.70 331.70h1v1h-1zM134.52 331.70h1v1h-1zM142.35 331.70h1v1h-1zM150.17 331.70h1v1h-1zM158.00 331.70h1v1h-1zM165.82 331.70h1v1h-1zM173.64 331.70h1v1h-1zM181.47 331.70h1v1h-1zM189.29 331.70h1v1h-1zM197.12 331.70h1v1h-1zM204.94 331.70h1v1h-1zM212.76 331.70h1v1h-1zM220.59 331.70h1v1h-1zM228.41 331.70h1v1h-1zM236.24 331.70h1v1h-1zM244.06 331.70h1v1h-1zM251.88 331.70h1v1h-1zM259.71 331.70h1v1h-1zM267.53 331.70h1v1h-1zM275.36 331.70h1v1h-1zM283.18 331.70h1v1h-1zM291.00 331.70h1v1h-1zM298.83 331.70h1v1h-1zM306.65 331.70h1v1h-1zM314.48 331.70h1v1h-1zM322.30 331.70h1v1h-1zM330.12 331.70h1v1h-1zM337.95 331.70h1v1h-1zM345.77 331.70h1v1h-1zM353.60 331.70h1v1h-1zM361.42 331.70h1v1h-1zM369.24 331.70h1v1h-1zM377.07 331.70h1v1h-1zM384.89 331.70h1v1h-1zM392.72 331.70h1v1h-1zM400.54 331.70h1v1h-1zM408.36 331.70h1v1h-1zM416.19 331.70h1v1h-1zM424.01 331.70h1v1h-1zM431.84 331.70h1v1h-1zM439.66 331.70h1v1h-1zM447.48 331.70h1v1h-1zM455.31 331.70h1v1h-1zM463.13 331.70h1v1h-1zM470.96 331.70h1v1h-1zM478.78 331.70h1v1h-1zM486.60 331.70h1v1h-1zM494.43 331.70h1v1h-1zM502.25 331.70h1v1h-1zM510.08 331.70h1v1h-1zM517.90 331.70h1v1h-1zM525.72 331.70h1v1h-1zM533.55 331.70h1v1h-1zM541.37 331.70h1v1h-1zM549.20 331.70h1v1h-1zM557.02 331.70h1v1h-1zM564.84 331.70h1v1h-1zM572.67 331.70h1v1h-1zM580.49 331.70h1v1h-1zM588.32 331.70h1v1h-1zM596.14 331.70h1v1h-1zM603.96 331.70h1v1h-1zM611.79 331.70h1v1h-1zM619.61 331.70h1v1h-1zM627.44 331.70h1v1h-1zM635.26 331.70h1v1h-1zM643.08 331.70h1v1h-1zM650.91 331.70h1v1h-1zM658.73 331.70h1v1h-1zM666.56 331.70h1v1h-1zM674.38 331.70h1v1h-1zM126.70 370.60h1v1h-1zM134.52 370.60h1v1h-1zM142.35 370.60h1v1h-1zM150.17 370.60h1v1h-1zM158.00 370.60h1v1h-1zM165.82 370.60h1v1h-1zM173.64 370.60h1v1h-1zM181.47 370.60h1v1h-1zM189.29 370.60h1v1h-1zM197.12 370.60h1v1h-1zM204.94 370.60h1v1h-1zM212.76 370.60h1v1h-1zM220.59 370.60h1v1h-1zM228.41 370.60h1v1h-1zM236.24 370.60h1v1h-1zM244.06 370.60h1v1h-1zM251.88 370.60h1v1h-1zM259.71 370.60h1v1h-1zM267.53 370.60h1v1h-1zM275.36 370.60h1v1h-1zM283.18 370.60h1v1h-1zM291.00 370.60h1v1h-1zM298.83 370.60h1v1h-1zM306.65 370.60h1v1h-1zM314.48 370.60h1v1h-1zM322.30 370.60h1v1h-1zM330.12 370.60h1v1h-1zM337.95 370.60h1v1h-1zM345.77 370.60h1v1h-1zM353.60 370.60h1v1h-1zM361.42 370.60h1v1h-1zM369.24 370.60h1v1h-1zM377.07 370.60h1v1h-1zM384.89 370.60h1v1h-1zM392.72 370.60h1v1h-1zM400.54 370.60h1v1h-1zM408.36 370.60h1v1h-1zM416.19 370.60h1v1h-1zM424.01 370.60h1v1h-1zM431.84 370.60h1v1h-1zM439.66 370.60h1v1h-1zM447.48 370.60h1v1h-1zM455.31 370.60h1v1h-1zM463.13 370.60h1v1h-1zM470.96 370.60h1v1h-1zM478.78 370.60h1v1h-1zM486.60 370.60h1v1h-1zM494.43 370.60h1v1h-1zM502.25 370.60h1v1h-1zM510.08 370.60h1v1h-1zM517.90 370.60h1v1h-1zM525.72 370.60h1v1h-1zM533.55 370.60h1v1h-1zM541.37 370.60h1v1h-1zM549.20 370.60h1v1h-1zM557.02 370.60h1v1h-1zM564.84 370.60h1v1h-1zM572.67 370.60h1v1h-1zM580.49 370.60h1v1h-1zM588.32 370.60h1v1h-1zM596.14 370.60h1v1h-1zM603.96 370.60h1v1h-1zM611.79 370.60h1v1h-1zM619.61 370.60h1v1h-1zM627.44 370.60h1v1h-1zM635.26 370.60h1v1h-1zM643.08 370.60h1v1h-1zM650.91 370.60h1v1h-1zM658.73 370.60h1v1h-1zM666.56 370.60h1v1h-1zM674.38 370.60h1v1h-1zM126.70 409.50h1v1h-1zM134.52 409.50h1v1h-1zM142.35 409.50h1v1h-1zM150.17 409.50h1v1h-1zM158.00 409.50h1v1h-1zM165.82 409.50h1v1h-1zM173.64 409.50h1v1h-1zM181.47 409.50h1v1h-1zM189.29 409.50h1v1h-1zM197.12 409.50h1v1h-1zM204.94 409.50h1v1h-1zM212.76 409.50h1v1h-1zM220.59 409.50h1v1h-1zM228.41 409.50h1v1h-1zM236.24 409.50h1v1h-1zM244.06 409.50h1v1h-1zM251.88 409.50h1v1h-1zM259.71 409.50h1v1h-1zM267.53 409.50h1v1h-1zM275.36 409.50h1v1h-1zM283.18 409.50h1v1h-1zM291.00 409.50h1v1h-1zM298.83 409.50h1v1h-1zM306.65 409.50h1v1h-1zM314.48 409.50h1v1h-1zM322.30 409.50h1v1h-1zM330.12 409.50h1v1h-1zM337.95 409.50h1v1h-1zM345.77 409.50h1v1h-1zM353.60 409.50h1v1h-1zM361.42 409.50h1v1h-1zM369.24 409.50h1v1h-1zM377.07 409.50h1v1h-1zM384.89 409.50h1v1h-1zM392.72 409.50h1v1h-1zM400.54 409.50h1v1h-1zM408.36 409.50h1v1h-1zM416.19 409.50h1v1h-1zM424.01 409.50h1v1h-1zM431.84 409.50h1v1h-1zM439.66 409.50h1v1h-1zM447.48 409.50h1v1h-1zM455.31 409.50h1v1h-1zM463.13 409.50h1v1h-1zM470.96 409.50h1v1h-1zM478.78 409.50h1v1h-1zM486.60 409.50h1v1h-1zM494.43 409.50h1v1h-1zM502.25 409.50h1v1h-1zM510.08 409.50h1v1h-1zM517.90 409.50h1v1h-1zM525.72 409.50h1v1h-1zM533.55 409.50h1v1h-1zM541.37 409.50h1v1h-1zM549.20 409.50h1v1h-1zM557.02 409.50h1v1h-1zM564.84 409.50h1v1h-1zM572.67 409.50h1v1h-1zM580.49 409.50h1v1h-1zM588.32 409.50h1v1h-1zM596.14 409.50h1v1h-1zM603.96 409.50h1v1h-1zM611.79 409.50h1v1h-1zM619.61 409.50h1v1h-1zM627.44 409.50h1v1h-1zM635.26 409.50h1v1h-1zM643.08 409.50h1v1h-1zM650.91 409.50h1v1h-1zM658.73 409.50h1v1h-1zM666.56 409.50h1v1h-1zM674.38 409.50h1v1h-1z" fill="#747474"/>
<path d="M126.80 253.50h0.8v2.6h-0.8zM129.41 254.40h0.8v0.8h-0.8zM132.02 254.40h0.8v0.8h-0.8zM134.62 253.50h0.8v2.6h-0.8zM137.23 254.40h0.8v0.8h-0.8zM139.84 254.40h0.8v0.8h-0.8zM142.45 253.50h0.8v2.6h-0.8zM145.06 254.40h0.8v0.8h-0.8zM147.66 254.40h0.8v0.8h-0.8zM150.27 253.50h0.8v2.6h-0.8zM152.88 254.40h0.8v0.8h-0.8zM155.49 254.40h0.8v0.8h-0.8zM158.10 253.50h0.8v2.6h-0.8zM160.70 254.40h0.8v0.8h-0.8zM163.31 254.40h0.8v0.8h-0.8zM165.92 253.50h0.8v2.6h-0.8zM168.53 254.40h0.8v0.8h-0.8zM171.14 254.40h0.8v0.8h-0.8zM173.74 253.50h0.8v2.6h-0.8zM176.35 254.40h0.8v0.8h-0.8zM178.96 254.40h0.8v0.8h-0.8zM181.57 253.50h0.8v2.6h-0.8zM184.18 254.40h0.8v0.8h-0.8zM186.78 254.40h0.8v0.8h-0.8zM189.39 253.50h0.8v2.6h-0.8zM192.00 254.40h0.8v0.8h-0.8zM194.61 254.40h0.8v0.8h-0.8zM197.22 253.50h0.8v2.6h-0.8zM199.82 254.40h0.8v0.8h-0.8zM202.43 254.40h0.8v0.8h-0.8zM205.04 253.50h0.8v2.6h-0.8zM207.65 254.40h0.8v0.8h-0.8zM210.26 254.40h0.8v0.8h-0.8zM212.86 253.50h0.8v2.6h-0.8zM215.47 254.40h0.8v0.8h-0.8zM218.08 254.40h0.8v0.8h-0.8zM220.69 253.50h0.8v2.6h-0.8zM223.30 254.40h0.8v0.8h-0.8zM225.90 254.40h0.8v0.8h-0.8zM228.51 253.50h0.8v2.6h-0.8zM231.12 254.40h0.8v0.8h-0.8zM233.73 254.40h0.8v0.8h-0.8zM236.34 253.50h0.8v2.6h-0.8zM238.94 254.40h0.8v0.8h-0.8zM241.55 254.40h0.8v0.8h-0.8zM244.16 253.50h0.8v2.6h-0.8zM246.77 254.40h0.8v0.8h-0.8zM249.38 254.40h0.8v0.8h-0.8zM251.98 253.50h0.8v2.6h-0.8zM254.59 254.40h0.8v0.8h-0.8zM257.20 254.40h0.8v0.8h-0.8zM259.81 253.50h0.8v2.6h-0.8zM262.42 254.40h0.8v0.8h-0.8zM265.02 254.40h0.8v0.8h-0.8zM267.63 253.50h0.8v2.6h-0.8zM270.24 254.40h0.8v0.8h-0.8zM272.85 254.40h0.8v0.8h-0.8zM275.46 253.50h0.8v2.6h-0.8zM278.06 254.40h0.8v0.8h-0.8zM280.67 254.40h0.8v0.8h-0.8zM283.28 253.50h0.8v2.6h-0.8zM285.89 254.40h0.8v0.8h-0.8zM288.50 254.40h0.8v0.8h-0.8zM291.10 253.50h0.8v2.6h-0.8zM293.71 254.40h0.8v0.8h-0.8zM296.32 254.40h0.8v0.8h-0.8zM298.93 253.50h0.8v2.6h-0.8zM301.54 254.40h0.8v0.8h-0.8zM304.14 254.40h0.8v0.8h-0.8zM306.75 253.50h0.8v2.6h-0.8zM309.36 254.40h0.8v0.8h-0.8zM311.97 254.40h0.8v0.8h-0.8zM314.58 253.50h0.8v2.6h-0.8zM317.18 254.40h0.8v0.8h-0.8zM319.79 254.40h0.8v0.8h-0.8zM322.40 253.50h0.8v2.6h-0.8zM325.01 254.40h0.8v0.8h-0.8zM327.62 254.40h0.8v0.8h-0.8zM330.22 253.50h0.8v2.6h-0.8zM332.83 254.40h0.8v0.8h-0.8zM335.44 254.40h0.8v0.8h-0.8zM338.05 253.50h0.8v2.6h-0.8zM340.66 254.40h0.8v0.8h-0.8zM343.26 254.40h0.8v0.8h-0.8zM345.87 253.50h0.8v2.6h-0.8zM348.48 254.40h0.8v0.8h-0.8zM351.09 254.40h0.8v0.8h-0.8zM353.70 253.50h0.8v2.6h-0.8zM356.30 254.40h0.8v0.8h-0.8zM358.91 254.40h0.8v0.8h-0.8zM361.52 253.50h0.8v2.6h-0.8zM364.13 254.40h0.8v0.8h-0.8zM366.74 254.40h0.8v0.8h-0.8zM369.34 253.50h0.8v2.6h-0.8zM371.95 254.40h0.8v0.8h-0.8zM374.56 254.40h0.8v0.8h-0.8zM377.17 253.50h0.8v2.6h-0.8zM379.78 254.40h0.8v0.8h-0.8zM382.38 254.40h0.8v0.8h-0.8zM384.99 253.50h0.8v2.6h-0.8zM387.60 254.40h0.8v0.8h-0.8zM390.21 254.40h0.8v0.8h-0.8zM392.82 253.50h0.8v2.6h-0.8zM395.42 254.40h0.8v0.8h-0.8zM398.03 254.40h0.8v0.8h-0.8zM400.64 253.50h0.8v2.6h-0.8zM403.25 254.40h0.8v0.8h-0.8zM405.86 254.40h0.8v0.8h-0.8zM408.46 253.50h0.8v2.6h-0.8zM411.07 254.40h0.8v0.8h-0.8zM413.68 254.40h0.8v0.8h-0.8zM416.29 253.50h0.8v2.6h-0.8zM418.90 254.40h0.8v0.8h-0.8zM421.50 254.40h0.8v0.8h-0.8zM424.11 253.50h0.8v2.6h-0.8zM426.72 254.40h0.8v0.8h-0.8zM429.33 254.40h0.8v0.8h-0.8zM431.94 253.50h0.8v2.6h-0.8zM434.54 254.40h0.8v0.8h-0.8zM437.15 254.40h0.8v0.8h-0.8zM439.76 253.50h0.8v2.6h-0.8zM442.37 254.40h0.8v0.8h-0.8zM444.98 254.40h0.8v0.8h-0.8zM447.58 253.50h0.8v2.6h-0.8zM450.19 254.40h0.8v0.8h-0.8zM452.80 254.40h0.8v0.8h-0.8zM455.41 253.50h0.8v2.6h-0.8zM458.02 254.40h0.8v0.8h-0.8zM460.62 254.40h0.8v0.8h-0.8zM463.23 253.50h0.8v2.6h-0.8zM465.84 254.40h0.8v0.8h-0.8zM468.45 254.40h0.8v0.8h-0.8zM471.06 253.50h0.8v2.6h-0.8zM473.66 254.40h0.8v0.8h-0.8zM476.27 254.40h0.8v0.8h-0.8zM478.88 253.50h0.8v2.6h-0.8zM481.49 254.40h0.8v0.8h-0.8zM484.10 254.40h0.8v0.8h-0.8zM486.70 253.50h0.8v2.6h-0.8zM489.31 254.40h0.8v0.8h-0.8zM491.92 254.40h0.8v0.8h-0.8zM494.53 253.50h0.8v2.6h-0.8zM497.14 254.40h0.8v0.8h-0.8zM499.74 254.40h0.8v0.8h-0.8zM502.35 253.50h0.8v2.6h-0.8zM504.96 254.40h0.8v0.8h-0.8zM507.57 254.40h0.8v0.8h-0.8zM510.18 253.50h0.8v2.6h-0.8zM512.78 254.40h0.8v0.8h-0.8zM515.39 254.40h0.8v0.8h-0.8zM518.00 253.50h0.8v2.6h-0.8zM520.61 254.40h0.8v0.8h-0.8zM523.22 254.40h0.8v0.8h-0.8zM525.82 253.50h0.8v2.6h-0.8zM528.43 254.40h0.8v0.8h-0.8zM531.04 254.40h0.8v0.8h-0.8zM533.65 253.50h0.8v2.6h-0.8zM536.26 254.40h0.8v0.8h-0.8zM538.86 254.40h0.8v0.8h-0.8zM541.47 253.50h0.8v2.6h-0.8zM544.08 254.40h0.8v0.8h-0.8zM546.69 254.40h0.8v0.8h-0.8zM549.30 253.50h0.8v2.6h-0.8zM551.90 254.40h0.8v0.8h-0.8zM554.51 254.40h0.8v0.8h-0.8zM557.12 253.50h0.8v2.6h-0.8zM559.73 254.40h0.8v0.8h-0.8zM562.34 254.40h0.8v0.8h-0.8zM564.94 253.50h0.8v2.6h-0.8zM567.55 254.40h0.8v0.8h-0.8zM570.16 254.40h0.8v0.8h-0.8zM572.77 253.50h0.8v2.6h-0.8zM575.38 254.40h0.8v0.8h-0.8zM577.98 254.40h0.8v0.8h-0.8zM580.59 253.50h0.8v2.6h-0.8zM583.20 254.40h0.8v0.8h-0.8zM585.81 254.40h0.8v0.8h-0.8zM588.42 253.50h0.8v2.6h-0.8zM591.02 254.40h0.8v0.8h-0.8zM593.63 254.40h0.8v0.8h-0.8zM596.24 253.50h0.8v2.6h-0.8zM598.85 254.40h0.8v0.8h-0.8zM601.46 254.40h0.8v0.8h-0.8zM604.06 253.50h0.8v2.6h-0.8zM606.67 254.40h0.8v0.8h-0.8zM609.28 254.40h0.8v0.8h-0.8zM611.89 253.50h0.8v2.6h-0.8zM614.50 254.40h0.8v0.8h-0.8zM617.10 254.40h0.8v0.8h-0.8zM619.71 253.50h0.8v2.6h-0.8zM622.32 254.40h0.8v0.8h-0.8zM624.93 254.40h0.8v0.8h-0.8zM627.54 253.50h0.8v2.6h-0.8zM630.14 254.40h0.8v0.8h-0.8zM632.75 254.40h0.8v0.8h-0.8zM635.36 253.50h0.8v2.6h-0.8zM637.97 254.40h0.8v0.8h-0.8zM640.58 254.40h0.8v0.8h-0.8zM643.18 253.50h0.8v2.6h-0.8zM645.79 254.40h0.8v0.8h-0.8zM648.40 254.40h0.8v0.8h-0.8zM651.01 253.50h0.8v2.6h-0.8zM653.62 254.40h0.8v0.8h-0.8zM656.22 254.40h0.8v0.8h-0.8zM658.83 253.50h0.8v2.6h-0.8zM661.44 254.40h0.8v0.8h-0.8zM664.05 254.40h0.8v0.8h-0.8zM666.66 253.50h0.8v2.6h-0.8zM669.26 254.40h0.8v0.8h-0.8zM671.87 254.40h0.8v0.8h-0.8zM674.48 253.50h0.8v2.6h-0.8z" fill="#8e8e8e"/>
<path d="M399.94 98.40h2.2v0.8h-2.2zM400.64 100.99h0.8v0.8h-0.8zM400.64 103.59h0.8v0.8h-0.8zM399.94 106.18h2.2v0.8h-2.2zM400.64 108.77h0.8v0.8h-0.8zM400.64 111.37h0.8v0.8h-0.8zM399.94 113.96h2.2v0.8h-2.2zM400.64 116.55h0.8v0.8h-0.8zM400.64 119.15h0.8v0.8h-0.8zM399.94 121.74h2.2v0.8h-2.2zM400.64 124.33h0.8v0.8h-0.8zM400.64 126.93h0.8v0.8h-0.8zM399.94 129.52h2.2v0.8h-2.2zM400.64 132.11h0.8v0.8h-0.8zM400.64 134.71h0.8v0.8h-0.8zM399.94 137.30h2.2v0.8h-2.2zM400.64 139.89h0.8v0.8h-0.8zM400.64 142.49h0.8v0.8h-0.8zM399.94 145.08h2.2v0.8h-2.2zM400.64 147.67h0.8v0.8h-0.8zM400.64 150.27h0.8v0.8h-0.8zM399.94 152.86h2.2v0.8h-2.2zM400.64 155.45h0.8v0.8h-0.8zM400.64 158.05h0.8v0.8h-0.8zM399.94 160.64h2.2v0.8h-2.2zM400.64 163.23h0.8v0.8h-0.8zM400.64 165.83h0.8v0.8h-0.8zM399.94 168.42h2.2v0.8h-2.2zM400.64 171.01h0.8v0.8h-0.8zM400.64 173.61h0.8v0.8h-0.8zM399.94 176.20h2.2v0.8h-2.2zM400.64 178.79h0.8v0.8h-0.8zM400.64 181.39h0.8v0.8h-0.8zM399.94 183.98h2.2v0.8h-2.2zM400.64 186.57h0.8v0.8h-0.8zM400.64 189.17h0.8v0.8h-0.8zM399.94 191.76h2.2v0.8h-2.2zM400.64 194.35h0.8v0.8h-0.8zM400.64 196.95h0.8v0.8h-0.8zM399.94 199.54h2.2v0.8h-2.2zM400.64 202.13h0.8v0.8h-0.8zM400.64 204.73h0.8v0.8h-0.8zM399.94 207.32h2.2v0.8h-2.2zM400.64 209.91h0.8v0.8h-0.8zM400.64 212.51h0.8v0.8h-0.8zM399.94 215.10h2.2v0.8h-2.2zM400.64 217.69h0.8v0.8h-0.8zM400.64 220.29h0.8v0.8h-0.8zM399.94 222.88h2.2v0.8h-2.2zM400.64 225.47h0.8v0.8h-0.8zM400.64 228.07h0.8v0.8h-0.8zM399.94 230.66h2.2v0.8h-2.2zM400.64 233.25h0.8v0.8h-0.8zM400.64 235.85h0.8v0.8h-0.8zM399.94 238.44h2.2v0.8h-2.2zM400.64 241.03h0.8v0.8h-0.8zM400.64 243.63h0.8v0.8h-0.8zM399.94 246.22h2.2v0.8h-2.2zM400.64 248.81h0.8v0.8h-0.8zM400.64 251.41h0.8v0.8h-0.8zM399.94 254.00h2.2v0.8h-2.2zM400.64 256.59h0.8v0.8h-0.8zM400.64 259.19h0.8v0.8h-0.8zM399.94 261.78h2.2v0.8h-2.2zM400.64 264.37h0.8v0.8h-0.8zM400.64 266.97h0.8v0.8h-0.8zM399.94 269.56h2.2v0.8h-2.2zM400.64 272.15h0.8v0.8h-0.8zM400.64 274.75h0.8v0.8h-0.8zM399.94 277.34h2.2v0.8h-2.2zM400.64 279.93h0.8v0.8h-0.8zM400.64 282.53h0.8v0.8h-0.8zM399.94 285.12h2.2v0.8h-2.2zM400.64 287.71h0.8v0.8h-0.8zM400.64 290.31h0.8v0.8h-0.8zM399.94 292.90h2.2v0.8h-2.2zM400.64 295.49h0.8v0.8h-0.8zM400.64 298.09h0.8v0.8h-0.8zM399.94 300.68h2.2v0.8h-2.2zM400.64 303.27h0.8v0.8h-0.8zM400.64 305.87h0.8v0.8h-0.8zM399.94 308.46h2.2v0.8h-2.2zM400.64 311.05h0.8v0.8h-0.8zM400.64 313.65h0.8v0.8h-0.8zM399.94 316.24h2.2v0.8h-2.2zM400.64 318.83h0.8v0.8h-0.8zM400.64 321.43h0.8v0.8h-0.8zM399.94 324.02h2.2v0.8h-2.2zM400.64 326.61h0.8v0.8h-0.8zM400.64 329.21h0.8v0.8h-0.8zM399.94 331.80h2.2v0.8h-2.2zM400.64 334.39h0.8v0.8h-0.8zM400.64 336.99h0.8v0.8h-0.8zM399.94 339.58h2.2v0.8h-2.2zM400.64 342.17h0.8v0.8h-0.8zM400.64 344.77h0.8v0.8h-0.8zM399.94 347.36h2.2v0.8h-2.2zM400.64 349.95h0.8v0.8h-0.8zM400.64 352.55h0.8v0.8h-0.8zM399.94 355.14h2.2v0.8h-2.2zM400.64 357.73h0.8v0.8h-0.8zM400.64 360.33h0.8v0.8h-0.8zM399.94 362.92h2.2v0.8h-2.2zM400.64 365.51h0.8v0.8h-0.8zM400.64 368.11h0.8v0.8h-0.8zM399.94 370.70h2.2v0.8h-2.2zM400.64 373.29h0.8v0.8h-0.8zM400.64 375.89h0.8v0.8h-0.8zM399.94 378.48h2.2v0.8h-2.2zM400.64 381.07h0.8v0.8h-0.8zM400.64 383.67h0.8v0.8h-0.8zM399.94 386.26h2.2v0.8h-2.2zM400.64 388.85h0.8v0.8h-0.8zM400.64 391.45h0.8v0.8h-0.8zM399.94 394.04h2.2v0.8h-2.2zM400.64 396.63h0.8v0.8h-0.8zM400.64 399.23h0.8v0.8h-0.8zM399.94 401.82h2.2v0.8h-2.2zM400.64 404.41h0.8v0.8h-0.8zM400.64 407.01h0.8v0.8h-0.8zM399.94 409.60h2.2v0.8h-2.2z" fill="#7a7a7a"/>
<rect x="126.6" y="98.8" width="547.68" height="311.2" fill="none" stroke="#8c8c8c" stroke-width="1"/>
<path d="M135.02 98.8v2.4M135.02 410.0v-2.4M142.85 98.8v2.4M142.85 410.0v-2.4M150.67 98.8v2.4M150.67 410.0v-2.4M158.50 98.8v2.4M158.50 410.0v-2.4M166.32 98.8v2.4M166.32 410.0v-2.4M174.14 98.8v2.4M174.14 410.0v-2.4M181.97 98.8v2.4M181.97 410.0v-2.4M189.79 98.8v2.4M189.79 410.0v-2.4M197.62 98.8v2.4M197.62 410.0v-2.4M205.44 98.8v2.4M205.44 410.0v-2.4M213.26 98.8v2.4M213.26 410.0v-2.4M221.09 98.8v2.4M221.09 410.0v-2.4M228.91 98.8v2.4M228.91 410.0v-2.4M236.74 98.8v2.4M236.74 410.0v-2.4M244.56 98.8v2.4M244.56 410.0v-2.4M252.38 98.8v2.4M252.38 410.0v-2.4M260.21 98.8v2.4M260.21 410.0v-2.4M268.03 98.8v2.4M268.03 410.0v-2.4M275.86 98.8v2.4M275.86 410.0v-2.4M283.68 98.8v2.4M283.68 410.0v-2.4M291.50 98.8v2.4M291.50 410.0v-2.4M299.33 98.8v2.4M299.33 410.0v-2.4M307.15 98.8v2.4M307.15 410.0v-2.4M314.98 98.8v2.4M314.98 410.0v-2.4M322.80 98.8v2.4M322.80 410.0v-2.4M330.62 98.8v2.4M330.62 410.0v-2.4M338.45 98.8v2.4M338.45 410.0v-2.4M346.27 98.8v2.4M346.27 410.0v-2.4M354.10 98.8v2.4M354.10 410.0v-2.4M361.92 98.8v2.4M361.92 410.0v-2.4M369.74 98.8v2.4M369.74 410.0v-2.4M377.57 98.8v2.4M377.57 410.0v-2.4M385.39 98.8v2.4M385.39 410.0v-2.4M393.22 98.8v2.4M393.22 410.0v-2.4M401.04 98.8v2.4M401.04 410.0v-2.4M408.86 98.8v2.4M408.86 410.0v-2.4M416.69 98.8v2.4M416.69 410.0v-2.4M424.51 98.8v2.4M424.51 410.0v-2.4M432.34 98.8v2.4M432.34 410.0v-2.4M440.16 98.8v2.4M440.16 410.0v-2.4M447.98 98.8v2.4M447.98 410.0v-2.4M455.81 98.8v2.4M455.81 410.0v-2.4M463.63 98.8v2.4M463.63 410.0v-2.4M471.46 98.8v2.4M471.46 410.0v-2.4M479.28 98.8v2.4M479.28 410.0v-2.4M487.10 98.8v2.4M487.10 410.0v-2.4M494.93 98.8v2.4M494.93 410.0v-2.4M502.75 98.8v2.4M502.75 410.0v-2.4M510.58 98.8v2.4M510.58 410.0v-2.4M518.40 98.8v2.4M518.40 410.0v-2.4M526.22 98.8v2.4M526.22 410.0v-2.4M534.05 98.8v2.4M534.05 410.0v-2.4M541.87 98.8v2.4M541.87 410.0v-2.4M549.70 98.8v2.4M549.70 410.0v-2.4M557.52 98.8v2.4M557.52 410.0v-2.4M565.34 98.8v2.4M565.34 410.0v-2.4M573.17 98.8v2.4M573.17 410.0v-2.4M580.99 98.8v2.4M580.99 410.0v-2.4M588.82 98.8v2.4M588.82 410.0v-2.4M596.64 98.8v2.4M596.64 410.0v-2.4M604.46 98.8v2.4M604.46 410.0v-2.4M612.29 98.8v2.4M612.29 410.0v-2.4M620.11 98.8v2.4M620.11 410.0v-2.4M627.94 98.8v2.4M627.94 410.0v-2.4M635.76 98.8v2.4M635.76 410.0v-2.4M643.58 98.8v2.4M643.58 410.0v-2.4M651.41 98.8v2.4M651.41 410.0v-2.4M659.23 98.8v2.4M659.23 410.0v-2.4M667.06 98.8v2.4M667.06 410.0v-2.4M126.6 106.58h2.4M126.6 114.36h2.4M126.6 122.14h2.4M126.6 129.92h2.4M126.6 137.70h2.4M126.6 145.48h2.4M126.6 153.26h2.4M126.6 161.04h2.4M126.6 168.82h2.4M126.6 176.60h2.4M126.6 184.38h2.4M126.6 192.16h2.4M126.6 199.94h2.4M126.6 207.72h2.4M126.6 215.50h2.4M126.6 223.28h2.4M126.6 231.06h2.4M126.6 238.84h2.4M126.6 246.62h2.4M126.6 254.40h2.4M126.6 262.18h2.4M126.6 269.96h2.4M126.6 277.74h2.4M126.6 285.52h2.4M126.6 293.30h2.4M126.6 301.08h2.4M126.6 308.86h2.4M126.6 316.64h2.4M126.6 324.42h2.4M126.6 332.20h2.4M126.6 339.98h2.4M126.6 347.76h2.4M126.6 355.54h2.4M126.6 363.32h2.4M126.6 371.10h2.4M126.6 378.88h2.4M126.6 386.66h2.4M126.6 394.44h2.4M126.6 402.22h2.4" stroke="#8c8c8c" stroke-width="0.8" fill="none"/>
<rect x="205.0" y="137.4" width="1" height="234.49999999999997" fill="#06363c"/>
<rect x="302.3" y="137.4" width="1" height="234.49999999999997" fill="#06363c"/>
<rect x="400.5" y="137.4" width="1" height="234.49999999999997" fill="#06363c"/>
<rect x="497.9" y="137.4" width="1" height="234.49999999999997" fill="#06363c"/>
<rect x="596.8" y="137.4" width="1" height="234.49999999999997" fill="#06363c"/>
<rect x="126.8" y="369.2" width="0.3" height="2.7" fill="#00f4f4"/>
<rect x="127.1" y="367.0" width="78.7" height="3" fill="#00f4f4"/>
<path d="M128.5 370.0h0.8v1.9h-0.8zM129.3 370.0h1.0v1.9h-1.0zM130.3 370.0h0.8v1.9h-0.8zM131.1 370.0h1.0v1.9h-1.0zM132.1 370.0h2.2v1.7h-2.2zM138.1 370.0h2.2v1.7h-2.2zM142.9 370.0h1.6v1.1h-1.6zM145.3 370.0h1.0v1.7h-1.0zM146.3 370.0h2.2v1.7h-2.2zM148.9 370.0h0.8v1.1h-0.8zM150.5 370.0h0.8v1.9h-0.8zM152.1 370.0h2.2v1.9h-2.2zM157.3 370.0h1.0v1.7h-1.0zM159.1 370.0h1.0v1.9h-1.0zM163.3 370.0h1.6v1.1h-1.6zM164.9 370.0h2.2v1.9h-2.2zM167.1 370.0h1.6v1.1h-1.6zM172.1 370.0h1.0v1.9h-1.0zM176.9 370.0h0.8v1.9h-0.8zM181.1 370.0h1.0v1.9h-1.0zM182.1 370.0h1.6v1.9h-1.6zM183.7 370.0h1.6v1.9h-1.6zM185.3 370.0h1.0v1.9h-1.0zM186.3 370.0h1.0v1.9h-1.0zM189.5 370.0h1.0v1.9h-1.0zM192.9 370.0h0.8v1.7h-0.8zM194.5 370.0h1.0v1.9h-1.0zM195.5 370.0h1.0v1.7h-1.0zM196.9 370.0h2.2v1.9h-2.2zM199.5 370.0h1.0v1.9h-1.0zM201.3 370.0h0.8v1.9h-0.8zM202.5 370.0h1.6v1.1h-1.6zM204.5 370.0h1.0v1.1h-1.0z" fill="#00f4f4"/>
<rect x="205.2" y="137.4" width="53.8" height="3" fill="#00f4f4"/>
<rect x="259.0" y="139.0" width="44.1" height="2.9" fill="#00f4f4"/>
<path d="M207.0 140.4h1.6v1.5h-1.6zM209.4 140.4h0.8v1.5h-0.8zM210.2 140.4h2.2v1.5h-2.2zM213.2 140.4h0.8v1.4h-0.8zM214.8 140.4h1.6v1.5h-1.6zM216.8 140.4h2.2v0.9h-2.2zM221.0 140.4h1.6v0.9h-1.6zM222.6 140.4h0.8v1.5h-0.8zM223.8 140.4h1.0v1.4h-1.0zM225.6 140.4h1.0v1.5h-1.0zM226.6 140.4h2.2v0.9h-2.2zM229.6 140.4h1.0v1.4h-1.0zM231.0 140.4h1.0v1.5h-1.0zM232.4 140.4h1.0v1.4h-1.0zM233.4 140.4h1.6v1.4h-1.6zM235.0 140.4h2.2v0.9h-2.2zM237.2 140.4h1.0v1.4h-1.0zM243.0 140.4h0.8v1.4h-0.8zM244.2 140.4h1.0v1.5h-1.0zM251.2 140.4h1.0v1.4h-1.0zM252.6 140.4h1.0v1.5h-1.0zM254.0 140.4h1.6v0.9h-1.6zM256.4 140.4h1.0v1.4h-1.0zM257.4 140.4h1.0v1.5h-1.0zM263.8 139.0h0.8v-0.8h-0.8zM266.4 139.0h1.0v-1.3h-1.0zM267.8 139.0h2.2v-1.4h-2.2zM279.2 139.0h2.2v-1.4h-2.2zM281.4 139.0h2.2v-1.3h-2.2zM290.0 139.0h1.0v-0.8h-1.0z" fill="#00f4f4"/>
<rect x="302.5" y="369.2" width="41.9" height="2.7" fill="#00f4f4"/>
<rect x="344.4" y="367.0" width="56.9" height="3" fill="#00f4f4"/>
<path d="M305.0 369.2h1.6v-1.1h-1.6zM311.4 369.2h1.0v-1.7h-1.0zM315.4 369.2h1.0v-1.9h-1.0zM320.6 369.2h1.0v-1.9h-1.0zM328.6 369.2h0.8v-1.1h-0.8zM335.6 369.2h1.0v-1.1h-1.0zM344.4 370.0h0.8v1.9h-0.8zM345.6 370.0h1.0v1.1h-1.0zM348.4 370.0h1.0v1.7h-1.0zM349.8 370.0h1.0v1.7h-1.0zM351.2 370.0h1.6v1.7h-1.6zM354.6 370.0h0.8v1.9h-0.8zM356.2 370.0h1.0v1.7h-1.0zM357.6 370.0h0.8v1.9h-0.8zM359.2 370.0h1.6v1.9h-1.6zM361.6 370.0h1.0v1.7h-1.0zM364.8 370.0h1.0v1.9h-1.0zM365.8 370.0h1.0v1.9h-1.0zM367.2 370.0h1.0v1.9h-1.0zM369.0 370.0h1.0v1.9h-1.0zM370.0 370.0h1.6v1.9h-1.6zM372.0 370.0h0.8v1.9h-0.8zM373.6 370.0h1.0v1.9h-1.0zM374.6 370.0h1.0v1.9h-1.0zM376.0 370.0h0.8v1.9h-0.8zM377.6 370.0h1.0v1.1h-1.0zM379.6 370.0h1.6v1.9h-1.6zM381.2 370.0h1.0v1.7h-1.0zM384.4 370.0h2.2v1.9h-2.2zM387.4 370.0h1.6v1.9h-1.6zM389.8 370.0h1.0v1.9h-1.0zM391.6 370.0h1.6v1.9h-1.6zM397.8 370.0h1.0v1.1h-1.0zM400.2 370.0h0.8v1.1h-0.8z" fill="#00f4f4"/>
<rect x="400.7" y="137.4" width="53.8" height="3" fill="#00f4f4"/>
<rect x="454.5" y="139.0" width="44.2" height="2.9" fill="#00f4f4"/>
<path d="M402.5 140.4h2.2v1.5h-2.2zM405.1 140.4h0.8v0.9h-0.8zM408.9 140.4h2.2v1.5h-2.2zM412.3 140.4h1.0v1.5h-1.0zM413.7 140.4h1.6v1.5h-1.6zM415.3 140.4h2.2v1.4h-2.2zM417.5 140.4h2.2v1.5h-2.2zM420.5 140.4h1.0v1.4h-1.0zM421.5 140.4h1.6v1.5h-1.6zM423.9 140.4h0.8v1.5h-0.8zM425.1 140.4h2.2v1.5h-2.2zM429.3 140.4h1.0v0.9h-1.0zM430.7 140.4h0.8v0.9h-0.8zM435.3 140.4h0.8v1.4h-0.8zM436.9 140.4h2.2v1.5h-2.2zM443.9 140.4h1.0v1.5h-1.0zM445.3 140.4h0.8v1.5h-0.8zM446.9 140.4h1.6v1.4h-1.6zM448.9 140.4h1.0v0.9h-1.0zM450.3 140.4h0.8v1.5h-0.8zM453.5 140.4h1.0v1.5h-1.0zM454.5 139.0h2.2v-1.4h-2.2zM457.1 139.0h0.8v-0.8h-0.8zM468.5 139.0h2.2v-0.8h-2.2zM474.1 139.0h1.0v-1.4h-1.0zM475.5 139.0h1.0v-1.4h-1.0zM478.7 139.0h1.6v-1.3h-1.6zM481.7 139.0h2.2v-1.4h-2.2zM484.3 139.0h1.6v-1.3h-1.6zM485.9 139.0h0.8v-1.4h-0.8zM486.7 139.0h1.0v-1.4h-1.0zM492.7 139.0h2.2v-1.4h-2.2zM496.9 139.0h1.0v-1.4h-1.0z" fill="#00f4f4"/>
<rect x="498.09999999999997" y="369.2" width="42.6" height="2.7" fill="#00f4f4"/>
<rect x="540.7" y="367.0" width="56.9" height="3" fill="#00f4f4"/>
<path d="M498.4 369.2h1.0v-1.7h-1.0zM502.8 369.2h1.0v-1.9h-1.0zM504.6 369.2h1.6v-1.9h-1.6zM508.6 369.2h0.8v-1.7h-0.8zM511.8 369.2h1.6v-1.1h-1.6zM513.4 369.2h1.0v-1.1h-1.0zM518.4 369.2h0.8v-1.9h-0.8zM520.0 369.2h2.2v-1.9h-2.2zM522.2 369.2h2.2v-1.9h-2.2zM524.8 369.2h1.6v-1.9h-1.6zM528.2 369.2h2.2v-1.9h-2.2zM531.2 369.2h1.0v-1.7h-1.0zM532.6 369.2h1.6v-1.7h-1.6zM536.6 369.2h1.6v-1.9h-1.6zM540.7 370.0h1.0v1.9h-1.0zM542.5 370.0h2.2v1.9h-2.2zM545.7 370.0h1.0v1.9h-1.0zM548.3 370.0h2.2v1.7h-2.2zM552.5 370.0h2.2v1.9h-2.2zM554.7 370.0h1.0v1.9h-1.0zM555.7 370.0h1.6v1.1h-1.6zM557.3 370.0h1.6v1.9h-1.6zM560.5 370.0h1.0v1.9h-1.0zM562.3 370.0h1.6v1.9h-1.6zM564.3 370.0h1.0v1.1h-1.0zM565.3 370.0h0.8v1.9h-0.8zM566.5 370.0h0.8v1.7h-0.8zM569.1 370.0h1.6v1.9h-1.6zM570.7 370.0h1.0v1.9h-1.0zM571.7 370.0h1.0v1.9h-1.0zM572.7 370.0h1.6v1.9h-1.6zM574.3 370.0h1.6v1.1h-1.6zM575.9 370.0h1.0v1.1h-1.0zM577.7 370.0h1.0v1.9h-1.0zM579.5 370.0h0.8v1.9h-0.8zM580.7 370.0h1.0v1.9h-1.0zM582.5 370.0h0.8v1.7h-0.8zM583.3 370.0h1.6v1.9h-1.6zM590.3 370.0h2.2v1.9h-2.2zM594.7 370.0h0.8v1.9h-0.8zM595.5 370.0h1.0v1.1h-1.0zM596.9 370.0h0.4v1.7h-0.4z" fill="#00f4f4"/>
<rect x="597.0" y="137.4" width="53.0" height="3" fill="#00f4f4"/>
<path d="M600.0 140.4h2.2v0.9h-2.2zM604.6 140.4h1.0v1.5h-1.0zM611.2 140.4h0.8v1.5h-0.8zM612.4 140.4h1.0v1.5h-1.0zM613.8 140.4h1.0v1.4h-1.0zM614.8 140.4h1.0v1.5h-1.0zM616.6 140.4h1.0v1.5h-1.0zM618.0 140.4h1.0v1.4h-1.0zM619.8 140.4h0.8v0.9h-0.8zM620.6 140.4h0.8v1.4h-0.8zM621.8 140.4h1.0v1.5h-1.0zM622.8 140.4h0.8v1.5h-0.8zM628.4 140.4h2.2v0.9h-2.2zM630.6 140.4h2.2v1.5h-2.2zM632.8 140.4h0.8v1.4h-0.8zM634.6 140.4h2.2v1.4h-2.2zM636.8 140.4h1.0v1.5h-1.0zM637.8 140.4h2.2v1.4h-2.2zM640.0 140.4h1.6v0.9h-1.6zM643.6 140.4h2.2v1.5h-2.2zM645.8 140.4h1.0v1.5h-1.0zM647.2 140.4h1.0v1.5h-1.0zM648.2 140.4h1.0v1.5h-1.0zM649.6 140.4h0.4v1.5h-0.4z" fill="#00f4f4"/>
</g>
<path d="M397 99.4h8v7.2l-4 3.8-4-3.8z" fill="#00f2f2"/>
<path d="M399 101.2h4v0.9h-1.5v2.6h-1v-2.6H399z" fill="#0a3a40"/>
<path d="M113 249.8h9.6l3.6 4.6-3.6 4.6H113z" fill="#00f2f2"/>
<text x="118.8" y="257.6" font-size="8.5" fill="#062a30" text-anchor="middle" font-weight="bold" >1</text>
<path d="M601.6 245.7l6.2-3.7v2h2.5v3.5h-2.5v2z" fill="#fff"/>
<rect x="104.1" y="74" width="55" height="22.6" fill="#025f06"/>
<text x="132.1" y="89.6" font-size="14.2" fill="#f4f4f4" text-anchor="middle" font-weight="bold" textLength="46" lengthAdjust="spacingAndGlyphs">TRIGED</text>
<path d="M161.3 74.7H178.6L183.6 85.30000000000001L178.6 95.9H161.3z" fill="url(#gpent)" stroke="#8c8c8c" stroke-width="1.4"/>
<text x="171.2" y="89.6" font-size="14.2" fill="#fff" text-anchor="middle" font-weight="bold" >M</text>
<path d="M182.2 74.7H282.3V95.9H182.2L186.6 85.30000000000001z" fill="#0b0405" stroke="#8c8c8c" stroke-width="1.4"/>
<text x="232.2" y="89.3" font-size="12" fill="#f2f2f2" text-anchor="middle" font-weight="normal" textLength="30.6" lengthAdjust="spacingAndGlyphs">200µs</text>
<rect x="285.3" y="75" width="48.6" height="9.4" fill="url(#gsmall)" stroke="#8c8c8c" stroke-width="1"/>
<rect x="285.3" y="86.8" width="48.6" height="9.4" fill="url(#gsmall)" stroke="#8c8c8c" stroke-width="1"/>
<text x="309.6" y="82.0" font-size="8.2" fill="#eee" text-anchor="middle" font-weight="normal" textLength="31.5" lengthAdjust="spacingAndGlyphs">5.6Mpts</text>
<text x="310" y="94.6" font-size="8.2" fill="#eee" text-anchor="middle" font-weight="normal" textLength="28.5" lengthAdjust="spacingAndGlyphs">2GSa/s</text>
<path d="M336.3 74.4H466V90.5L460.5 96.2H421.5L420 93.8H382L380 96.2H341.8L336.3 90.5z" fill="#000" stroke="#2e8df0" stroke-width="1.1"/>
<path d="M336 90.2L342 96.6H336z" fill="#2e8df0"/><path d="M466.4 90.2L460.4 96.6H466.4z" fill="#2e8df0"/>
<path d="M380 96.9L382 94.1H420L421.6 96.9z" fill="#3a92ec" stroke="#1259b0" stroke-width="0.5"/>
<polyline points="338.6,87.4 343.0,82.4 347.7,87.6 352.4,82.4 357.1,87.6 361.8,82.4 366.5,87.6 371.3,82.4 376.0,87.6 380.7,82.4 385.4,87.6 390.1,82.4 394.8,87.6 399.5,82.4 404.2,87.6 408.9,82.4 413.6,87.6 418.4,82.4 423.1,87.6 427.8,82.4 432.5,87.6 437.2,82.4 441.9,87.6 446.6,82.4 451.3,87.6 456.0,82.4 460.7,87.6 464.6,84.5" fill="none" stroke="#d4d4d4" stroke-width="0.9"/>
<path d="M339.6 81.4h-1.2v8h1.2M463.8 81.4h1.2v8h-1.2" fill="none" stroke="#bdbdbd" stroke-width="0.7"/>
<path d="M467.6 74.7H484.6L489.4 85.30000000000001L484.6 95.9H467.6z" fill="url(#gpent)" stroke="#8c8c8c" stroke-width="1.4"/>
<text x="477.7" y="89.6" font-size="14.2" fill="#fff" text-anchor="middle" font-weight="bold" >D</text>
<path d="M488.6 74.7H562.4V95.9H488.6L493.40000000000003 85.30000000000001z" fill="#0b0405" stroke="#8c8c8c" stroke-width="1.4"/>
<text x="526.4" y="89.3" font-size="12" fill="#f2f2f2" text-anchor="middle" font-weight="normal" textLength="11.6" lengthAdjust="spacingAndGlyphs">0s</text>
<path d="M566.3 74.7H585L589.8 85.30000000000001L585 95.9H566.3z" fill="url(#gpent)" stroke="#8c8c8c" stroke-width="1.4"/>
<text x="576.4" y="89.6" font-size="14.2" fill="#fff" text-anchor="middle" font-weight="bold" >T</text>
<path d="M589 74.7H728.1V95.9H589L593.8 85.30000000000001z" fill="#0b0405" stroke="#8c8c8c" stroke-width="1.4"/>
<path d="M595 88.6h8.4v-10.2h8.6" fill="none" stroke="#f0f0f0" stroke-width="1.1"/>
<path d="M599.2 85.6l4.2-3.8 4.2 3.8" fill="none" stroke="#e8e8e8" stroke-width="0.9"/>
<text x="669.4" y="88.9" font-size="12.1" fill="#2fd0d6" text-anchor="middle" font-weight="normal" textLength="102" lengthAdjust="spacingAndGlyphs">CH1 E DC 120.00mV</text>
<rect x="103.6" y="414.2" width="33.4" height="34" rx="2" fill="url(#gbtn)" stroke="#505050" stroke-width="0.8"/>
<rect x="110" y="422" width="9" height="8.6" rx="1" fill="#3b95f5"/><rect x="110" y="432.8" width="9" height="8.4" rx="1" fill="#3b95f5"/><rect x="121.3" y="432.8" width="8.8" height="8.4" rx="1" fill="#3b95f5"/>
<path d="M125.6 421l5.2 5.4-5.2 5.4-5.2-5.4z" fill="none" stroke="#3b95f5" stroke-width="1.3"/>
<path d="M138.6 426H156.2L161.2 436.5L156.2 447H138.6z" fill="#00f6f6" stroke="#00f6f6" stroke-width="1.4"/>
<text x="148" y="441.2" font-size="14.2" fill="#0a1a1a" text-anchor="middle" font-weight="bold" >1</text>
<path d="M159.2 426H268.6V447H159.2L164.0 436.5z" fill="#0b0405" stroke="#12e8ee" stroke-width="1.5"/>
<path d="M166.6 436.8q1.5-2.4 3 0t3 0" fill="none" stroke="#ddd" stroke-width="0.7"/>
<text x="210.6" y="440.6" font-size="11.2" fill="#f2f2f2" text-anchor="middle" font-weight="normal" textLength="68" lengthAdjust="spacingAndGlyphs">500mV 1.000X</text>
<path d="M271.3 426H288.6L293.4 436.5L288.6 447H271.3z" fill="url(#gpent)" stroke="#8c8c8c" stroke-width="1.4"/>
<text x="280.6" y="441.2" font-size="14.2" fill="#fff" text-anchor="middle" font-weight="bold" >2</text>
<path d="M289.4 426H400.4V447H289.4L294.2 436.5z" fill="#0b0405" stroke="#8c8c8c" stroke-width="1.4"/>
<text x="346.6" y="440.5" font-size="10.4" fill="#f2f2f2" text-anchor="middle" font-weight="normal" textLength="17.6" lengthAdjust="spacingAndGlyphs">OFF</text>
<path d="M402.7 426H420.0L424.79999999999995 436.5L420.0 447H402.7z" fill="url(#gpent)" stroke="#8c8c8c" stroke-width="1.4"/>
<text x="412.0" y="441.2" font-size="14.2" fill="#fff" text-anchor="middle" font-weight="bold" >3</text>
<path d="M420.79999999999995 426H531.8V447H420.79999999999995L425.59999999999997 436.5z" fill="#0b0405" stroke="#8c8c8c" stroke-width="1.4"/>
<text x="478.0" y="440.5" font-size="10.4" fill="#f2f2f2" text-anchor="middle" font-weight="normal" textLength="17.6" lengthAdjust="spacingAndGlyphs">OFF</text>
<path d="M534.3 426H551.6L556.4 436.5L551.6 447H534.3z" fill="url(#gpent)" stroke="#8c8c8c" stroke-width="1.4"/>
<text x="543.6" y="441.2" font-size="14.2" fill="#fff" text-anchor="middle" font-weight="bold" >4</text>
<path d="M552.4 426H663.4V447H552.4L557.1999999999999 436.5z" fill="#0b0405" stroke="#8c8c8c" stroke-width="1.4"/>
<text x="609.6" y="440.5" font-size="10.4" fill="#f2f2f2" text-anchor="middle" font-weight="normal" textLength="17.6" lengthAdjust="spacingAndGlyphs">OFF</text>
<rect x="665.3" y="426" width="15" height="21.2" fill="url(#gsmall)" stroke="#8c8c8c" stroke-width="1"/>
<g stroke="#707070" stroke-width="1" fill="none" stroke-linecap="round"><path d="M673.3 429.6v12.6M673.3 440.2l-3.8-3v-1.6M673.3 438.2l3.7-2.6v-1"/></g><circle cx="673.3" cy="443" r="1.5" fill="#707070"/><circle cx="669.4" cy="435.2" r="1.3" fill="#707070"/><circle cx="677" cy="434.4" r="1.2" fill="#707070"/><circle cx="673.3" cy="429.8" r="1" fill="#707070"/>
<rect x="683.3" y="426" width="45.4" height="21.2" fill="url(#gsmall)" stroke="#8c8c8c" stroke-width="1"/>
<text x="707" y="434.1" font-size="8.3" fill="#f2f2f2" text-anchor="middle" font-weight="normal" textLength="22.4" lengthAdjust="spacingAndGlyphs">08:46</text>
<text x="706.2" y="444.5" font-size="7.6" fill="#f2f2f2" text-anchor="middle" font-weight="normal" textLength="41.6" lengthAdjust="spacingAndGlyphs">2022/11/29</text>
<path d="M641 98.4H624.6L615.8 105.7V185.8L636.4 200.8V348L622.6 356.6V393.4L636.4 403.4V421H641z" fill="#0b2340"/>
<path d="M641 98.4H624.6L615.8 105.7V185.8L636.4 200.8V348L622.6 356.6V393.4L636.4 403.4V421" fill="none" stroke="#2b7fd6" stroke-width="0.9"/>
<rect x="640.6" y="97.9" width="88.4" height="313.4" fill="#878787"/>
<rect x="727.9" y="97.9" width="1.1" height="323.4" fill="#878787"/>
<rect x="641.8" y="411.2" width="86.1" height="9.6" fill="#000"/>
<rect x="637" y="420.8" width="92.6" height="0.8" fill="#5a6a7c"/>
<text x="0" y="0" font-size="12" fill="#2fd0d6" text-anchor="middle" font-weight="normal" transform="translate(632 142.8) rotate(-90)">CH1</text>
<path d="M630 374.6v-11M626 367.6l4-4.2 4 4.2" fill="none" stroke="#8a8a8a" stroke-width="1.2"/>
<path d="M630 377.4v11.2M625.8 384.4l4.2 4.4 4.2-4.4" fill="none" stroke="#fff" stroke-width="1.4"/>
<path d="M643.3 122.2V103.10000000000001L646.3 99.7H725L728 103.10000000000001V122.2z" fill="url(#ghead)"/>
<path d="M645.6999999999999 100.7H725.6" stroke="#3a8fe8" stroke-width="2"/>
<text x="685.3" y="115.9" font-size="12" fill="#f4f4f4" text-anchor="middle">耦合</text>
<rect x="643.3" y="122.2" width="84.70000000000005" height="37" fill="#18558f"/>
<text x="684.1" y="146.9" font-size="12" fill="#f4f4f4" text-anchor="middle">交流</text>
<path d="M645.4 150.3l3.8-3v6z" fill="#fff"/>
<path d="M643.3 184.7V165.6L646.3 162.2H725L728 165.6V184.7z" fill="url(#ghead)"/>
<path d="M645.6999999999999 163.2H725.6" stroke="#3a8fe8" stroke-width="2"/>
<text x="685.2" y="178.4" font-size="12" fill="#f4f4f4" text-anchor="middle">带宽限制</text>
<rect x="643.3" y="184.7" width="84.70000000000005" height="37" fill="#000"/>
<text x="689.6" y="209.3" font-size="12" fill="#f4f4f4" text-anchor="middle">满带宽</text>
<circle cx="649.6" cy="196.5" r="3.6" fill="none" stroke="#3d7fd2" stroke-width="1.1"/><circle cx="649.6" cy="196.5" r="1.7" fill="#3b9bff"/>
<circle cx="649.6" cy="210.79999999999998" r="3.6" fill="none" stroke="#6a6a6a" stroke-width="0.9"/>
<path d="M643.3 247.2V228.1L646.3 224.7H725L728 228.1V247.2z" fill="url(#ghead)"/>
<path d="M645.6999999999999 225.7H725.6" stroke="#3a8fe8" stroke-width="2"/>
<text x="685.3" y="240.9" font-size="12" fill="#f4f4f4" text-anchor="middle">伏格</text>
<rect x="643.3" y="247.2" width="84.70000000000005" height="37" fill="#000"/>
<text x="689.4" y="271.8" font-size="12" fill="#f4f4f4" text-anchor="middle">粗调</text>
<circle cx="649.6" cy="259.0" r="3.6" fill="none" stroke="#3d7fd2" stroke-width="1.1"/><circle cx="649.6" cy="259.0" r="1.7" fill="#3b9bff"/>
<circle cx="649.6" cy="273.3" r="3.6" fill="none" stroke="#6a6a6a" stroke-width="0.9"/>
<path d="M643.3 309.7V290.59999999999997L646.3 287.2H725L728 290.59999999999997V309.7z" fill="url(#ghead)"/>
<path d="M645.6999999999999 288.2H725.6" stroke="#3a8fe8" stroke-width="2"/>
<text x="685.2" y="303.4" font-size="12" fill="#f4f4f4" text-anchor="middle">反相</text>
<rect x="643.3" y="309.7" width="84.70000000000005" height="37" fill="#000"/>
<text x="689.6" y="334.3" font-size="12" fill="#f4f4f4" text-anchor="middle">关</text>
<circle cx="649.6" cy="321.5" r="3.6" fill="none" stroke="#3d7fd2" stroke-width="1.1"/><circle cx="649.6" cy="321.5" r="1.7" fill="#3b9bff"/>
<circle cx="649.6" cy="335.8" r="3.6" fill="none" stroke="#6a6a6a" stroke-width="0.9"/>
<path d="M643.3 372.2V353.09999999999997L646.3 349.7H725L728 353.09999999999997V372.2z" fill="url(#ghead)"/>
<path d="M645.6999999999999 350.7H725.6" stroke="#3a8fe8" stroke-width="2"/>
<text x="685.6" y="365.9" font-size="12" fill="#8c8c8c" text-anchor="middle">阻抗</text>
<rect x="643.3" y="372.2" width="84.70000000000005" height="37" fill="#000"/>
<text x="684.8" y="396.3" font-size="12" fill="#8c8c8c" text-anchor="middle" font-weight="normal" >1MΩ</text>
<circle cx="677.6" cy="415.8" r="2.1" fill="#2e8df0"/><circle cx="685.7" cy="415.8" r="2.1" fill="#fff"/>
<rect x="736.4" y="75.3" width="76.2" height="21.2" rx="2.2" fill="#1b5590" stroke="#172a44" stroke-width="1"/>
<rect x="736.4" y="101.4" width="76.2" height="21.2" rx="2.2" fill="#df9420" stroke="#172a44" stroke-width="1"/>
<rect x="736.4" y="127.5" width="76.2" height="21.2" rx="2.2" fill="#22c322" stroke="#172a44" stroke-width="1"/>
<text x="774" y="88.6" font-size="6.2" fill="#fff" text-anchor="middle">菜单</text>
<text x="775.3" y="114.6" font-size="6.2" fill="#fff6d0" text-anchor="middle">自动</text>
<text x="774.5" y="140.9" font-size="6.2" fill="#f4ffd8" text-anchor="middle">运行/停止</text>
<rect x="743.2" y="81.4" width="12" height="1.7" fill="#fff"/><path d="M739.2 81.2h2.8l-1.4 2.2z" fill="#fff"/>
<rect x="743.2" y="85.4" width="12" height="1.7" fill="#fff"/><path d="M739.2 85.2h2.8l-1.4 2.2z" fill="#fff"/>
<rect x="743.2" y="89.4" width="12" height="1.7" fill="#fff"/><path d="M739.2 89.2h2.8l-1.4 2.2z" fill="#fff"/>
<rect x="743.45" y="106.0" width="2.5" height="3" fill="#fff" transform="rotate(0 744.7 111.7)"/><rect x="743.45" y="106.0" width="2.5" height="3" fill="#fff" transform="rotate(45 744.7 111.7)"/><rect x="743.45" y="106.0" width="2.5" height="3" fill="#fff" transform="rotate(90 744.7 111.7)"/><rect x="743.45" y="106.0" width="2.5" height="3" fill="#fff" transform="rotate(135 744.7 111.7)"/><rect x="743.45" y="106.0" width="2.5" height="3" fill="#fff" transform="rotate(180 744.7 111.7)"/><rect x="743.45" y="106.0" width="2.5" height="3" fill="#fff" transform="rotate(225 744.7 111.7)"/><rect x="743.45" y="106.0" width="2.5" height="3" fill="#fff" transform="rotate(270 744.7 111.7)"/><rect x="743.45" y="106.0" width="2.5" height="3" fill="#fff" transform="rotate(315 744.7 111.7)"/>
<circle cx="744.7" cy="111.7" r="4.3" fill="#fff"/><circle cx="744.7" cy="111.7" r="2.4" fill="#df9420"/>
<circle cx="752.2" cy="115.6" r="3.2" fill="#df9420" stroke="#fff" stroke-width="1"/><path d="M751.2 113.9l2.8 1.7-2.8 1.7z" fill="#fff"/>
<path d="M739.4 134.2l7.4 4.3-7.4 4.3z" fill="#fff"/><path d="M745.2 143.4l4.8-11" stroke="#fff" stroke-width="0.8"/><path d="M751.3 133.4v9.2M754.7 133.4v9.2" stroke="#fff" stroke-width="1.1"/>
<path d="M773.1 155.45A3 3 0 1 1 769.65 158.6" fill="none" stroke="#141e30" stroke-width="1.1"/><path d="M767.9 158L771.3 157.5L768.9 154.8z" fill="#141e30"/>
<circle cx="773.2" cy="179.6" r="14.3" fill="#0f5bb6"/>
<path d="M736.7 179.6L748.4000000000001 162.5L755.6 168.6A13.4 13.4 0 0 0 755.6 190.6L748.4000000000001 196.7zM809.7 179.6L798.0 162.5L790.8000000000001 168.6A13.4 13.4 0 0 1 790.8000000000001 190.6L798.0 196.7z" fill="#0f5bb6" stroke="#0f5bb6" stroke-width="1.8" stroke-linejoin="round"/>
<text x="773.4" y="182.2" font-size="6.2" fill="#fff" text-anchor="middle">选择</text>
<path d="M748.9000000000001 168.79999999999998Q745.0 175.0 745.2 184.0" fill="none" stroke="#fff" stroke-width="1"/>
<path d="M743.5 183.0L746.9000000000001 183.0L745.3000000000001 186.29999999999998z" fill="#fff"/>
<path d="M797.5 168.79999999999998Q801.4000000000001 175.0 801.2 184.0" fill="none" stroke="#fff" stroke-width="1"/>
<path d="M802.9000000000001 183.0L799.5 183.0L801.1 186.29999999999998z" fill="#fff"/>
<circle cx="773.2" cy="228.5" r="14.3" fill="#0f5bb6"/>
<path d="M736.7 228.5L748.4000000000001 211.4L755.6 217.5A13.4 13.4 0 0 0 755.6 239.5L748.4000000000001 245.6zM809.7 228.5L798.0 211.4L790.8000000000001 217.5A13.4 13.4 0 0 1 790.8000000000001 239.5L798.0 245.6z" fill="#0f5bb6" stroke="#0f5bb6" stroke-width="1.8" stroke-linejoin="round"/>
<text x="772.2" y="209.8" font-size="6.8" fill="#1c2636" text-anchor="middle" font-weight="normal" >VOLTS</text>
<text x="773.2" y="231.1" font-size="6.2" fill="#fff" text-anchor="middle">居中</text>
<rect x="739.8000000000001" y="228.3" width="7.4" height="1.9" fill="#fff"/>
<rect x="798.6" y="228.2" width="6.8" height="1.9" fill="#fff"/><rect x="801.0500000000001" y="225.7" width="1.9" height="6.9" fill="#fff"/>
<circle cx="773.2" cy="277.6" r="14.3" fill="#0f5bb6"/>
<path d="M736.7 277.6L748.4000000000001 260.5L755.6 266.6A13.4 13.4 0 0 0 755.6 288.6L748.4000000000001 294.70000000000005zM809.7 277.6L798.0 260.5L790.8000000000001 266.6A13.4 13.4 0 0 1 790.8000000000001 288.6L798.0 294.70000000000005z" fill="#0f5bb6" stroke="#0f5bb6" stroke-width="1.8" stroke-linejoin="round"/>
<text x="772.2" y="258.90000000000003" font-size="6.8" fill="#1c2636" text-anchor="middle" font-weight="normal" >YSCALE</text>
<text x="773.3" y="280.2" font-size="6.2" fill="#fff" text-anchor="middle">切换粗细</text>
<path d="M748.9000000000001 266.8Q745.0 273.0 745.2 282.0" fill="none" stroke="#fff" stroke-width="1"/>
<path d="M743.5 281.0L746.9000000000001 281.0L745.3000000000001 284.3z" fill="#fff"/>
<path d="M797.5 266.8Q801.4000000000001 273.0 801.2 282.0" fill="none" stroke="#fff" stroke-width="1"/>
<path d="M802.9000000000001 281.0L799.5 281.0L801.1 284.3z" fill="#fff"/>
<text x="747.6" y="292.0" font-size="6.8" fill="#fff" text-anchor="middle" font-weight="normal" >V</text>
<text x="798.4000000000001" y="292.0" font-size="6.8" fill="#fff" text-anchor="middle" font-weight="normal" >mV</text>
<circle cx="773.2" cy="326.8" r="14.3" fill="#0f5bb6"/>
<path d="M736.7 326.8L748.4000000000001 309.7L755.6 315.8A13.4 13.4 0 0 0 755.6 337.8L748.4000000000001 343.90000000000003zM809.7 326.8L798.0 309.7L790.8000000000001 315.8A13.4 13.4 0 0 1 790.8000000000001 337.8L798.0 343.90000000000003z" fill="#0f5bb6" stroke="#0f5bb6" stroke-width="1.8" stroke-linejoin="round"/>
<text x="772.2" y="308.1" font-size="6.8" fill="#1c2636" text-anchor="middle" font-weight="normal" >SEC</text>
<text x="773.2" y="329.4" font-size="6.2" fill="#fff" text-anchor="middle">居中</text>
<path d="M738.8000000000001 327.2l4-3.4v1.8h4.4v3.2h-4.4v1.8z" fill="#fff"/>
<path d="M808.0 327.2l-4-3.4v1.8h-4.4v3.2h4.4v1.8z" fill="#fff"/>
<circle cx="773.2" cy="375.9" r="14.3" fill="#0f5bb6"/>
<path d="M736.7 375.9L748.4000000000001 358.79999999999995L755.6 364.9A13.4 13.4 0 0 0 755.6 386.9L748.4000000000001 393.0zM809.7 375.9L798.0 358.79999999999995L790.8000000000001 364.9A13.4 13.4 0 0 1 790.8000000000001 386.9L798.0 393.0z" fill="#0f5bb6" stroke="#0f5bb6" stroke-width="1.8" stroke-linejoin="round"/>
<text x="772.2" y="357.2" font-size="6.8" fill="#1c2636" text-anchor="middle" font-weight="normal" >XSCALE</text>
<text x="773.2" y="378.29999999999995" font-size="6.2" fill="#fff" text-anchor="middle" font-weight="normal" >ZOOM</text>
<path d="M748.9000000000001 365.09999999999997Q745.0 371.29999999999995 745.2 380.29999999999995" fill="none" stroke="#fff" stroke-width="1"/>
<path d="M743.5 379.29999999999995L746.9000000000001 379.29999999999995L745.3000000000001 382.59999999999997z" fill="#fff"/>
<path d="M797.5 365.09999999999997Q801.4000000000001 371.29999999999995 801.2 380.29999999999995" fill="none" stroke="#fff" stroke-width="1"/>
<path d="M802.9000000000001 379.29999999999995L799.5 379.29999999999995L801.1 382.59999999999997z" fill="#fff"/>
<text x="747.6" y="390.29999999999995" font-size="6.8" fill="#fff" text-anchor="middle" font-weight="normal" >s</text>
<text x="798.4000000000001" y="390.29999999999995" font-size="6.8" fill="#fff" text-anchor="middle" font-weight="normal" >ns</text>
<circle cx="773.2" cy="425" r="14.3" fill="#0f5bb6"/>
<path d="M736.7 425L748.4000000000001 407.9L755.6 414.0A13.4 13.4 0 0 0 755.6 436.0L748.4000000000001 442.1zM809.7 425L798.0 407.9L790.8000000000001 414.0A13.4 13.4 0 0 1 790.8000000000001 436.0L798.0 442.1z" fill="#0f5bb6" stroke="#0f5bb6" stroke-width="1.8" stroke-linejoin="round"/>
<text x="772.2" y="406.3" font-size="6.8" fill="#1c2636" text-anchor="middle" font-weight="normal" >TRIG</text>
<text x="773.2" y="427.6" font-size="6.2" fill="#fff" text-anchor="middle">居中</text>
<path d="M744.6 428.2l-2.8-3.4h1.4v-3.8h2.8v3.8h1.4z" fill="#fff"/>
<path d="M802.4000000000001 420.8l-2.8 3.4h1.4v4h2.8v-4h1.4z" fill="#fff"/>
</svg>
</body></html>
